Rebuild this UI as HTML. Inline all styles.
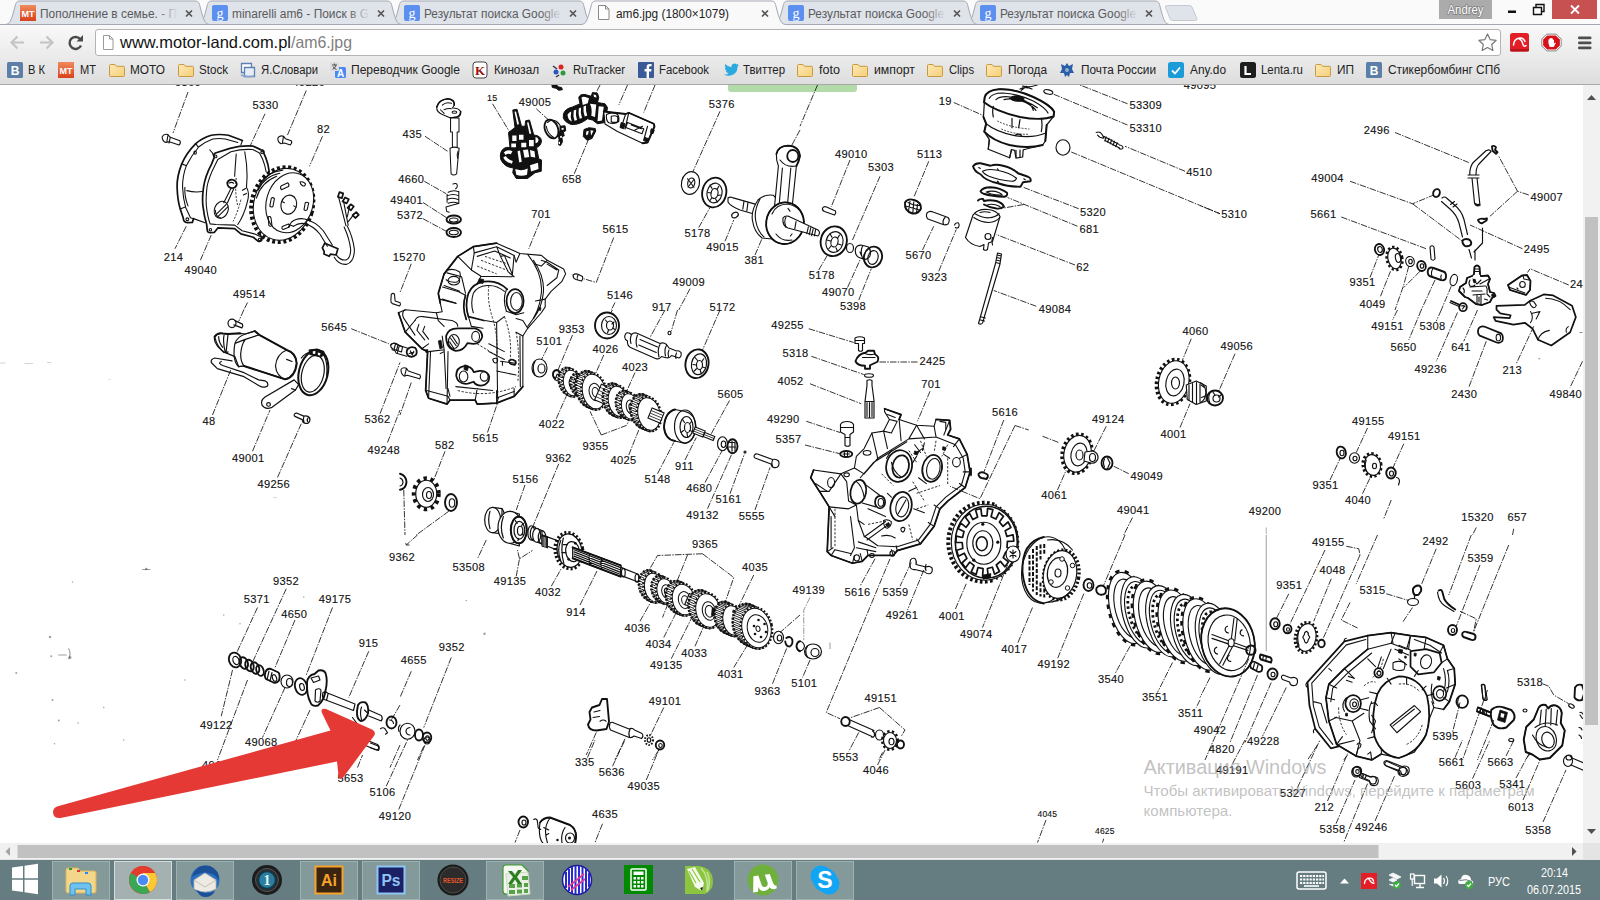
<!DOCTYPE html>
<html lang="ru"><head><meta charset="utf-8"><title>am6.jpg (1800×1079)</title>
<style>
html,body{margin:0;padding:0;background:#fff;overflow:hidden}
svg{display:block}
text{font-family:"Liberation Sans","DejaVu Sans",sans-serif}
.ui{font-size:12px;fill:#222}
.tabt{font-size:12px;fill:#5a5a5a}
.lb{font-size:11.6px;fill:#111;letter-spacing:.45px;stroke:#111;stroke-width:.25px}
.ln{fill:none;stroke:#111;stroke-width:1}
.pt{fill:none;stroke:#111;stroke-width:1.15;stroke-linejoin:round;stroke-linecap:round}
.pw{fill:#fff;stroke:#111;stroke-width:1.15;stroke-linejoin:round;stroke-linecap:round}
.pk{fill:#111;stroke:#111;stroke-width:1;stroke-linejoin:round}
.th{fill:none;stroke:#111;stroke-width:1.8;stroke-linejoin:round;stroke-linecap:round}
.dd{fill:none;stroke:#111;stroke-width:1;stroke-dasharray:2.2 1.6}
.z4 .ln{stroke-width:3.4px;stroke-dasharray:26 5 6 5}
.z4 .sl{fill:none;stroke:#111;stroke-width:3.6px}
.z4 .pt,.z4 .pw{stroke-width:4.6px}
.z4 .pk{stroke-width:3px}
.z4 .th{stroke-width:7.5px}
.z4 .dd{stroke-width:4px;stroke-dasharray:9 6}
.z4 text{font-size:44.5px;letter-spacing:1.4px;stroke-width:.5px;fill:#111;stroke:#111}
.z4 .sm{font-size:36px;letter-spacing:1px}
.z5 .ln{stroke-width:4.4px;stroke-dasharray:33 7 8 7}
.z5 .pt,.z5 .pw{stroke-width:5.6px}
.z5 .pk{stroke-width:4px}
.z5 .th{stroke-width:9px}
.z5 .dd{stroke-width:4.5px;stroke-dasharray:12 8}
.z1 text{font-size:11.1px;letter-spacing:.35px;fill:#111;stroke:#111;stroke-width:.12px}
.z1 .ln{stroke-width:.85px;stroke-dasharray:6.500 1.300 1.500 1.300}
.z1 .sm{font-size:8.500px;letter-spacing:.2px}
.wm{fill:#9a9a9a;fill-opacity:.62}
.z8 .pt,.z8 .pw{stroke-width:9px}
.z8 .th{stroke-width:15px}
.z8 .pk{stroke-width:8px}
.z10 .pt,.z10 .pw{stroke-width:11px}
.z10 .th{stroke-width:18px}
.z10 .pk{stroke-width:8px}
.z6 .pt,.z6 .pw{stroke-width:7px}
.z6 .th{stroke-width:11px}
.z6 .pk{stroke-width:6px}
.z6 .dd{stroke-width:5.500px;stroke-dasharray:14 9}
</style></head><body>
<svg width="1600" height="900" viewBox="0 0 1600 900">
<defs>
<linearGradient id="tbg" x1="0" y1="0" x2="0" y2="1"><stop offset="0" stop-color="#f9f9f9"/><stop offset="0.5" stop-color="#ececec"/><stop offset="1" stop-color="#dddddd"/></linearGradient>
<linearGradient id="fold" x1="0" y1="0" x2="1" y2="1"><stop offset="0" stop-color="#fde9b4"/><stop offset="1" stop-color="#f6cf7a"/></linearGradient>
<linearGradient id="mtg" x1="0" y1="0" x2="0" y2="1"><stop offset="0" stop-color="#f08a5d"/><stop offset="1" stop-color="#d8421d"/></linearGradient>
<linearGradient id="fade" x1="0" y1="0" x2="1" y2="0"><stop offset="0" stop-color="#dfe3ea" stop-opacity="0"/><stop offset="1" stop-color="#dfe3ea"/></linearGradient>
<g id="folder"><path d="M0.5 3.5 q0 -1 1 -1 h4.5 l1.5 1.8 h7 q1 0 1 1 v8.2 q0 1 -1 1 h-13 q-1 0 -1 -1z" fill="url(#fold)" stroke="#c9993f" stroke-width="1"/></g>
<g id="gfav"><rect width="16" height="16" rx="2" fill="#5b8ff0"/><text x="8" y="12.5" text-anchor="middle" font-size="14" fill="#fff" style="font-family:&quot;Liberation Serif&quot;,serif">g</text></g>
<g id="mtfav"><rect width="16" height="16" fill="url(#mtg)"/><text x="8" y="11.5" text-anchor="middle" font-size="9.5" font-weight="bold" fill="#fff" textLength="13" lengthAdjust="spacingAndGlyphs">МТ</text></g>
<g id="tabx"><path d="M-3 -3 L3 3 M3 -3 L-3 3" stroke="#555" stroke-width="1.7" fill="none"/></g>
</defs>
<g id="chrome">
<rect x="0" y="0" width="1600" height="30" fill="#fafafa"/>
<path d="M965 24.5 C970 24.5 971 20 973 14 L975.5 4.5 C976.5 1.5 977.5 1 980 1 L1155 1 C1157.5 1 1158.5 1.5 1159.5 4.5 L1162 14 C1164 20 1165 24.5 1170 24.5" fill="#dfe3ea" stroke="#a4a9b3" stroke-width="1"/>
<use href="#gfav" x="980" y="5"/><text class="tabt" x="1000" y="17.5" textLength="136" lengthAdjust="spacingAndGlyphs">Результат поиска Google</text><rect x="1116" y="4" width="22" height="18" fill="url(#fade)"/><use href="#tabx" x="1149" y="13.5"/>
<path d="M773 24.5 C778 24.5 779 20 781 14 L783.5 4.5 C784.5 1.5 785.5 1 788 1 L963 1 C965.5 1 966.5 1.5 967.5 4.5 L970 14 C972 20 973 24.5 978 24.5" fill="#dfe3ea" stroke="#a4a9b3" stroke-width="1"/>
<use href="#gfav" x="788" y="5"/><text class="tabt" x="808" y="17.5" textLength="136" lengthAdjust="spacingAndGlyphs">Результат поиска Google</text><rect x="924" y="4" width="22" height="18" fill="url(#fade)"/><use href="#tabx" x="957" y="13.5"/>
<path d="M389 24.5 C394 24.5 395 20 397 14 L399.5 4.5 C400.5 1.5 401.5 1 404 1 L579 1 C581.5 1 582.5 1.5 583.5 4.5 L586 14 C588 20 589 24.5 594 24.5" fill="#dfe3ea" stroke="#a4a9b3" stroke-width="1"/>
<use href="#gfav" x="404" y="5"/><text class="tabt" x="424" y="17.5" textLength="136" lengthAdjust="spacingAndGlyphs">Результат поиска Google</text><rect x="540" y="4" width="22" height="18" fill="url(#fade)"/><use href="#tabx" x="573" y="13.5"/>
<path d="M197 24.5 C202 24.5 203 20 205 14 L207.5 4.5 C208.5 1.5 209.5 1 212 1 L387 1 C389.5 1 390.5 1.5 391.5 4.5 L394 14 C396 20 397 24.5 402 24.5" fill="#dfe3ea" stroke="#a4a9b3" stroke-width="1"/>
<use href="#gfav" x="212" y="5"/><text class="tabt" x="232" y="17.5" textLength="137" lengthAdjust="spacingAndGlyphs">minarelli am6 - Поиск в G</text><rect x="348" y="4" width="22" height="18" fill="url(#fade)"/><use href="#tabx" x="381" y="13.5"/>
<path d="M5 24.5 C10 24.5 11 20 13 14 L15.5 4.5 C16.5 1.5 17.5 1 20 1 L195 1 C197.5 1 198.5 1.5 199.5 4.5 L202 14 C204 20 205 24.5 210 24.5" fill="#dfe3ea" stroke="#a4a9b3" stroke-width="1"/>
<use href="#mtfav" x="20" y="5"/><text class="tabt" x="40" y="17.5" textLength="137" lengthAdjust="spacingAndGlyphs">Пополнение в семье. - П</text><rect x="156" y="4" width="22" height="18" fill="url(#fade)"/><use href="#tabx" x="189" y="13.5"/>
<path d="M1167.500 5.500 h22 q2 0 2.800 2 l4.500 11 q0.500 2 -1.500 2 h-22.500 q-2 0 -2.800 -2 l-4.500 -11 q-0.500 -2 2 -2z" fill="#dfe3ea" stroke="#c4c8cf" stroke-width="1"/>
<rect x="0" y="24.5" width="1600" height="60" fill="url(#tbg)"/>
<path d="M0 24.5 H1600" stroke="#a4a9b3" stroke-width="1"/>
<path d="M0 84.5 H1600" stroke="#a8a8a8" stroke-width="1"/>
<path d="M581 24.5 C586 24.5 587 20 589 14 L591.5 4.5 C592.5 1.5 593.5 1 596 1 L771 1 C773.5 1 774.5 1.5 775.5 4.5 L778 14 C780 20 781 24.5 786 24.5 L786 26 L581 26z" fill="#f9f9f9" stroke="none"/>
<path d="M581 24.5 C586 24.5 587 20 589 14 L591.5 4.5 C592.5 1.5 593.5 1 596 1 L771 1 C773.5 1 774.5 1.5 775.5 4.5 L778 14 C780 20 781 24.5 786 24.5" fill="none" stroke="#a4a9b3" stroke-width="1"/>
<path d="M598.5 5.5 h7 l3.5 3.5 v10.5 h-10.5z M605.5 5.5 v3.5 h3.5" fill="#fff" stroke="#8a8a8a" stroke-width="1"/><text class="ui" x="616" y="17.5" textLength="113" lengthAdjust="spacingAndGlyphs">am6.jpg (1800×1079)</text><use href="#tabx" x="765" y="13.5"/>
<rect x="1439" y="0" width="53" height="19" fill="#ababab"/>
<text x="1465.5" y="14" text-anchor="middle" font-size="12.5" fill="#fff" stroke="#7d7d7d" stroke-width="1.6" paint-order="stroke" stroke-linejoin="round" textLength="36" lengthAdjust="spacingAndGlyphs">Andrey</text>
<rect x="1508" y="10.5" width="8" height="2.5" fill="#111"/>
<path d="M1533.5 7.500 h8 v7 h-8z M1536 7 v-2.500 h8 v7 h-2.500" fill="none" stroke="#111" stroke-width="1.4"/>
<rect x="1552" y="0" width="45" height="19" fill="#c75050"/>
<path d="M1571 5.500 l8 8 M1579 5.500 l-8 8" stroke="#fff" stroke-width="1.800"/>
<path d="M24 42.500 H12 M17.500 36.500 L11.500 42.500 L17.500 48.500" fill="none" stroke="#c4c4c4" stroke-width="2.200"/>
<path d="M40 42.500 H52 M46.500 36.500 L52.500 42.500 L46.500 48.500" fill="none" stroke="#c4c4c4" stroke-width="2.200"/>
<path d="M80.500 39.500 A6 6 0 1 0 81 45.500" fill="none" stroke="#4a4a4a" stroke-width="2.400"/><path d="M76.500 41.500 h6.500 v-6.500z" fill="#4a4a4a"/>
<rect x="95.500" y="29.500" width="1405" height="26" rx="2.500" fill="#fff" stroke="#b4b4b4" stroke-width="1"/>
<path d="M103.500 35.500 h6 l3.500 3.500 v10.500 h-9.500z M109.500 35.500 v3.500 h3.500" fill="#fff" stroke="#9a9a9a" stroke-width="1"/>
<text x="120" y="48" font-size="16.500" fill="#111" textLength="171" lengthAdjust="spacingAndGlyphs">www.motor-land.com.pl</text>
<text x="291" y="48" font-size="16.500" fill="#808080" textLength="61" lengthAdjust="spacingAndGlyphs">/am6.jpg</text>
<path d="M1487.500 34 l2.600 5.600 6.100 0.700 -4.500 4.200 1.200 6 -5.400 -3 -5.400 3 1.200 -6 -4.500 -4.200 6.100 -0.700z" fill="#fff" stroke="#777" stroke-width="1.200" stroke-linejoin="round"/>
<rect x="1510" y="33" width="19" height="18.500" rx="2.500" fill="#e41e26"/><rect x="1510" y="49" width="19" height="2.500" rx="1" fill="#b5151b"/>
<path d="M1513.500 45 c.5 -7.500 9 -9.500 11.500 -3.500 M1518.200 38.200 c2.500 1 4.500 4 5 7 q1.200 1.800 2.800 .3" fill="none" stroke="#fff" stroke-width="1.500" stroke-linecap="round"/>
<g transform="translate(1551.500 42.500) scale(.88) translate(-1551.500 -42.500)">
<path d="M1546 33 h11 l5.500 5.500 v8 l-5.500 5.500 h-11 l-5.500 -5.500 v-8z" fill="#fff" stroke="#555" stroke-width="0.800"/>
<path d="M1546.700 34.500 h9.600 l4.700 4.700 v6.600 l-4.700 4.700 h-9.600 l-4.700 -4.700 v-6.600z" fill="#d8101a"/>
<path d="M1548 43 v-4 h1.200 v-1.200 h1.300 v-0.500 h1.300 v0.700 h1.300 v1.500 h1.200 v4.500 l1.200 -1.500 1 0.600 -2.500 4.500 h-4.500z" fill="#fff"/>
</g>
<rect x="1578" y="36.5" width="13.500" height="2.800" rx="1.300" fill="#4e4e4e"/>
<rect x="1578" y="41.5" width="13.500" height="2.800" rx="1.300" fill="#4e4e4e"/>
<rect x="1578" y="46.5" width="13.500" height="2.800" rx="1.300" fill="#4e4e4e"/>
<rect x="7" y="62" width="16" height="16" rx="1.500" fill="#5b7fa6"/><text x="15" y="74.5" text-anchor="middle" font-size="12" font-weight="bold" fill="#fff">В</text>
<text class="ui" x="28" y="74" textLength="17" lengthAdjust="spacingAndGlyphs">В К</text>
<use href="#mtfav" x="58" y="62"/>
<text class="ui" x="80" y="74" textLength="16" lengthAdjust="spacingAndGlyphs">МТ</text>
<use href="#folder" x="109" y="62"/>
<text class="ui" x="130" y="74" textLength="35" lengthAdjust="spacingAndGlyphs">МОТО</text>
<use href="#folder" x="178" y="62"/>
<text class="ui" x="199" y="74" textLength="29" lengthAdjust="spacingAndGlyphs">Stock</text>
<path d="M241.5 63.5 h10 v9 h-10z" fill="#fff" stroke="#5d7fb3" stroke-width="1.300"/><path d="M244.5 67.5 h10 v9 h-10z" fill="#e8eef8" stroke="#5d7fb3" stroke-width="1.300"/><path d="M241 75 q6 3 13 1" fill="none" stroke="#8aa3cc" stroke-width="1.500"/>
<text class="ui" x="261" y="74" textLength="57" lengthAdjust="spacingAndGlyphs">Я.Словари</text>
<rect x="335" y="67" width="11" height="11" rx="1.500" fill="#4a8af4"/><text x="340.5" y="76.5" text-anchor="middle" font-size="10" font-weight="bold" fill="#fff">A</text><rect x="330" y="62" width="9" height="9" rx="1" fill="#dcdcdc"/><path d="M332 65 h5 M334.5 63.5 v1.500 M332.5 69.5 q3 -1.500 3.500 -4.500 M333 66.5 q1 2 3.500 3" stroke="#444" stroke-width=".9" fill="none"/>
<text class="ui" x="351" y="74" textLength="109" lengthAdjust="spacingAndGlyphs">Переводчик Google</text>
<rect x="473" y="62" width="14" height="16" rx="3" fill="#fff" stroke="#444" stroke-width="1"/><text x="480" y="75" text-anchor="middle" font-size="13" font-weight="bold" fill="#a01010" style="font-family:&quot;Liberation Serif&quot;,serif">K</text>
<text class="ui" x="494" y="74" textLength="45" lengthAdjust="spacingAndGlyphs">Кинозал</text>
<circle cx="556" cy="72" r="2.500" fill="#2a55c4"/><circle cx="561" cy="67" r="2.500" fill="#d22"/><circle cx="563" cy="73" r="2.500" fill="#2a9a3a"/><path d="M553 66 l4 3 M559 75 l-3 2" stroke="#334" stroke-width="1.500"/>
<text class="ui" x="573" y="74" textLength="52" lengthAdjust="spacingAndGlyphs">RuTracker</text>
<rect x="638" y="62" width="16" height="16" rx="1" fill="#3b5998"/><path d="M649 78 v-6.500 h2.200 l0.300 -2.500 h-2.500 v-1.500 q0 -1.200 1.200 -1.200 h1.400 v-2.200 h-2 q-3 0 -3 3 v1.900 h-2 v2.500 h2 v6.500z" fill="#fff"/>
<text class="ui" x="659" y="74" textLength="50" lengthAdjust="spacingAndGlyphs">Facebook</text>
<path d="M724 74.5 q3 .5 4.500 -1.200 q-2 -.3 -2.800 -2.200 h1.300 q-2.300 -1 -2.300 -3.300 l1.300 .4 q-2 -2 -.8 -4.200 q2.500 3 6.300 3.300 q-.5 -3.500 2.800 -3.900 q1.500 0 2.500 1 l2 -.8 l-1.300 1.800 l1.700 -.4 l-1.600 1.600 q.2 6 -5.200 8.500 q-4.500 1.800 -8.400 -.6z" fill="#2aa9e0"/>
<text class="ui" x="743" y="74" textLength="42" lengthAdjust="spacingAndGlyphs">Твиттер</text>
<use href="#folder" x="797" y="62"/>
<text class="ui" x="819" y="74" textLength="21" lengthAdjust="spacingAndGlyphs">foto</text>
<use href="#folder" x="852" y="62"/>
<text class="ui" x="874" y="74" textLength="41" lengthAdjust="spacingAndGlyphs">импорт</text>
<use href="#folder" x="927" y="62"/>
<text class="ui" x="949" y="74" textLength="25" lengthAdjust="spacingAndGlyphs">Clips</text>
<use href="#folder" x="986" y="62"/>
<text class="ui" x="1008" y="74" textLength="39" lengthAdjust="spacingAndGlyphs">Погода</text>
<path d="M1067 63 l2 3 4 -2 -1 5 2 4 -4 0 -1 4 -2 -2 -2 2 -1 -4 -4 0 2 -4 -1 -5 4 2z" fill="#2a5fa8"/><circle cx="1067" cy="70" r="2" fill="#fff" opacity=".5"/>
<text class="ui" x="1081" y="74" textLength="75" lengthAdjust="spacingAndGlyphs">Почта России</text>
<rect x="1168" y="62" width="16" height="16" rx="2.500" fill="#1b9bd8"/><path d="M1172 70.5 l3 3 5 -6" fill="none" stroke="#fff" stroke-width="1.800"/>
<text class="ui" x="1190" y="74" textLength="36" lengthAdjust="spacingAndGlyphs">Any.do</text>
<rect x="1240" y="62" width="16" height="16" rx="2.500" fill="#1e1e1e"/><path d="M1245.5 66 v8 h5.500" fill="none" stroke="#fff" stroke-width="2.200"/>
<text class="ui" x="1261" y="74" textLength="42" lengthAdjust="spacingAndGlyphs">Lenta.ru</text>
<use href="#folder" x="1315" y="62"/>
<text class="ui" x="1337" y="74" textLength="17" lengthAdjust="spacingAndGlyphs">ИП</text>
<rect x="1366" y="62" width="16" height="16" rx="1.500" fill="#5b7fa6"/><text x="1374" y="74.5" text-anchor="middle" font-size="12" font-weight="bold" fill="#fff">В</text>
<text class="ui" x="1388" y="74" textLength="112" lengthAdjust="spacingAndGlyphs">Стикербомбинг СПб</text>
</g>
<clipPath id="pagec"><rect x="0" y="85" width="1583" height="758"/></clipPath>
<g id="diagram" clip-path="url(#pagec)">
<g class="z4" transform="translate(0,85) scale(.25)">
<text x="700" y="2">5360</text><text x="1170" y="2">49226</text>
<text x="1010" y="97">5330</text><text x="1268" y="190">82</text>
<text x="655" y="702">214</text><text x="738" y="757">49040</text><text x="932" y="852">49514</text>
<path class="ln" d="M752 28 L692 192 M1225 22 L1150 200 M1060 115 L1000 245 M1290 205 L1238 325 M745 565 L700 655 M845 600 L800 705 M990 870 L975 900"/>
</g>
<g class="z6" transform="translate(160,125) scale(.15552)">
<!-- bolts -->
<path class="pt" d="M14 75 q10 -20 36 -14 l16 18 l62 22 q8 16 -6 28 l-62 -22 l-22 6 q-24 -10 -24 -38z M52 62 l-8 44 M66 80 l-8 36"/>
<path class="pt" d="M758 84 q10 -20 36 -12 l12 16 l38 14 q8 14 -6 26 l-38 -12 l-22 4 q-22 -8 -20 -36z M794 72 l-6 40"/>
<!-- cover 214 -->
<path class="th" d="M530 100 L440 66 Q380 56 330 66 Q270 84 230 120 Q170 180 140 250 Q108 330 110 400 Q112 480 130 540 L150 600 Q150 626 176 628 L208 626 L216 602"/>
<path class="pt" d="M500 112 L420 90 Q380 84 340 90 Q290 108 250 140 Q200 200 170 260 Q144 330 145 400 Q148 470 165 530 L196 596 L290 628 M530 100 L520 128 M216 602 L290 628 M320 160 q20 16 26 44 M172 422 q50 14 100 6 M230 120 l16 22 M140 250 l26 10 M130 540 l32 -12 M160 400 q-4 60 20 120"/>
<ellipse class="pt" cx="226" cy="178" rx="8" ry="10"/><ellipse class="pt" cx="176" cy="606" rx="9" ry="9"/>
<!-- gasket 49040 -->
<path class="th" d="M350 205 Q340 190 356 180 L450 150 Q530 130 600 136 L650 160 Q672 160 668 182 L680 210 Q696 250 702 300 M350 205 L332 250 Q290 330 280 400 Q270 470 276 520 Q284 590 300 640 L304 676 Q304 694 326 692 L350 690 L372 662 L480 666 L520 700 L600 722 L632 748 Q652 752 656 734 L644 704"/>
<path class="pt" d="M372 222 L352 262 Q312 340 302 400 Q294 470 298 520 Q306 590 322 636 L360 640 L480 644 L528 680 L606 700 L640 716 M372 222 L456 172 Q530 152 596 158 L640 180 L660 220 Q676 260 682 300"/>
<ellipse class="pt" cx="358" cy="202" rx="8" ry="9"/><ellipse class="pt" cx="656" cy="176" rx="8" ry="8"/><ellipse class="pt" cx="324" cy="674" rx="8" ry="8"/><ellipse class="pt" cx="640" cy="736" rx="8" ry="8"/>
<!-- inner cover details -->
<path class="pt" d="M545 172 Q560 250 560 330 L556 400 Q580 440 560 500 Q540 580 500 640 M490 186 Q484 260 480 330 M530 420 l20 -12 M536 450 l20 -10"/>
<path class="dd" d="M490 340 Q480 440 500 520 M520 480 Q500 560 470 620"/>
<path class="th" d="M432 372 q10 -24 36 -20 q24 8 26 30 q-8 24 -34 24 q-26 -6 -28 -34z"/><path class="pt" d="M444 374 q14 -10 30 0 M456 408 L410 500 M474 410 L434 500"/>
<ellipse class="pt" cx="394" cy="545" rx="44" ry="56" transform="rotate(22 394 545)"/><path class="pt" d="M366 570 L426 510 M376 586 L436 526 M356 548 q0 40 36 52"/>
<!-- flywheel -->
<ellipse cx="786" cy="512" rx="196" ry="244" transform="rotate(16 786 512)" fill="none" stroke="#111" stroke-width="26" stroke-dasharray="19 17"/>
<ellipse class="pw" cx="790" cy="510" rx="186" ry="234" transform="rotate(16 790 510)"/>
<path class="pt" d="M640 380 q50 -80 150 -90 M630 420 q40 -90 140 -110 M620 470 q30 -100 130 -140"/>
<ellipse class="pw" cx="834" cy="500" rx="150" ry="196" transform="rotate(16 834 500)"/>
<ellipse class="pt" cx="828" cy="512" rx="50" ry="62" transform="rotate(16 828 512)"/>
<path class="pt" d="M778 392 l44 -20 q12 10 4 24 l-44 20 q-12 -8 -4 -24z M900 366 q20 -6 36 12 q-4 18 -16 14 q-18 -8 -20 -26z M716 470 q12 -8 20 4 l-10 50 q-12 8 -20 -4z M934 500 q12 -8 22 2 l-10 44 q-12 8 -20 -2z M696 590 q12 -6 18 8 l6 48 q-10 10 -20 0z M786 652 l40 -16 q12 6 6 20 l-40 16 q-12 -4 -6 -20z M860 520 l14 8 M800 500 l-12 -6"/>
<!-- wires -->
<path class="pt" d="M846 624 Q880 596 930 604 Q1000 620 1050 680 L1108 772 M860 650 Q890 628 930 634 Q990 650 1030 704 L1076 780 M846 624 l-20 30 M830 640 l30 12"/>
<path class="th" d="M1044 790 l16 -30 l84 36 l-12 40 l-36 -6 l-8 14 l-34 -14 l2 -16z"/>
<path class="pt" d="M1120 850 Q1150 900 1200 896 Q1250 880 1250 800 Q1240 720 1204 650 M1136 838 Q1160 872 1196 868 Q1226 856 1226 800 Q1218 730 1184 656 M1196 648 L1150 470 M1210 644 L1180 490 M1204 590 L1220 520 M1212 620 L1250 570"/>
<path class="th" d="M1144 462 l10 -30 l24 8 l-8 30z M1174 492 l16 -26 l24 12 l-14 26z M1206 532 l20 -22 l20 14 l-18 24z M1238 580 l24 -20 l16 18 l-22 20z"/>
</g>
<rect x="728" y="80" width="129" height="12" rx="3" fill="#b2dba9"/>
<g class="z4" transform="translate(400,85) scale(.25)">
<text x="10" y="210">435</text><text x="97" y="390" text-anchor="end">4660</text><text x="92" y="475" text-anchor="end">49401</text><text x="92" y="537" text-anchor="end">5372</text><text x="102" y="703" text-anchor="end">15270</text>
<text class="sm" x="348" y="65">15</text><text x="475" y="82">49005</text><text x="648" y="390">658</text><text x="525" y="533">701</text><text x="810" y="593">5615</text>
<text x="1235" y="90">5376</text><text x="1138" y="607">5178</text><text x="1225" y="663">49015</text><text x="1378" y="715">381</text><text x="1090" y="805">49009</text><text x="828" y="857">5146</text><text x="1008" y="902">917</text><text x="1238" y="902">5172</text>
<path class="ln" d="M100 205 L190 265 M97 385 L185 435 M92 470 L185 530 M92 535 L185 585 M370 75 L440 190 M545 95 L600 145 M755 215 L695 360 M560 545 L515 655 M1280 105 L1170 350 M1195 570 L1240 490 M1300 625 L1335 540 M1420 680 L1450 610 M800 0 L780 40 M910 0 L875 80 M1020 0 L975 110 M1160 815 L1115 900 M860 870 L845 900 M45 715 L0 830 M1600 180 L1565 245 M855 610 L785 790 L735 775"/>
<!-- washers -->
<ellipse class="th" cx="215" cy="538" rx="29" ry="16"/><ellipse class="pt" cx="215" cy="540" rx="17" ry="8"/>
<ellipse class="th" cx="215" cy="590" rx="29" ry="18"/><ellipse class="pt" cx="215" cy="590" rx="18" ry="9"/>
<!-- 5615 dowel -->
<path class="pt" d="M692 760 q10 -8 22 -2 l16 8 q4 10 -4 18 l-22 -6 q-12 -4 -12 -18z M712 760 q-6 10 -2 20"/>
<!-- bearings -->
<ellipse class="pt" cx="1162" cy="392" rx="36" ry="46" transform="rotate(12 1162 392)"/><ellipse class="pt" cx="1165" cy="392" rx="14" ry="20" transform="rotate(12 1165 392)"/><path class="pt" d="M1150 375 l26 34 M1152 408 l24 -30"/>
<ellipse class="th" cx="1257" cy="430" rx="48" ry="60" transform="rotate(12 1257 430)"/><ellipse class="pt" cx="1258" cy="432" rx="30" ry="40" transform="rotate(12 1258 432)"/><ellipse class="pt" cx="1258" cy="434" rx="14" ry="20" transform="rotate(12 1258 434)"/>
<path class="pt" d="M1240 400 l8 14 M1275 405 l-6 12 M1282 440 l-12 2 M1270 468 l-8 -12 M1240 462 l8 -12 M1232 430 l12 2"/>
<ellipse class="pt" cx="1340" cy="520" rx="14" ry="10" transform="rotate(-30 1340 520)"/>
</g>
<g class="z5" transform="translate(380,85) scale(.18328)">
<path class="pw" d="M310 120 Q320 80 370 75 Q410 80 405 110 L395 125 Q430 125 440 145 Q440 170 420 175 L385 180 L350 165 Q305 150 310 120z"/>
<path class="th" d="M310 120 Q320 80 370 75 Q410 80 405 110 M440 145 Q440 170 420 175 L385 180"/>
<ellipse class="pt" cx="406" cy="148" rx="13" ry="6"/><path class="pt" d="M340 110 q20 -20 50 -10 M350 135 q20 -10 40 -6 M330 135 l20 20"/>
<path class="pw" d="M385 180 h46 v76 h-10 v84 h-26 v-84 h-10z"/>
<path class="pw" d="M382 345 Q405 335 432 345 L426 400 L418 485 Q402 498 388 485 L384 400z"/><path class="pt" d="M426 360 q-8 20 -2 40"/>
<!-- spring -->
<path class="pt" d="M398 540 q20 -8 24 8 q0 14 -10 18 M372 585 q30 -16 56 -2 M366 605 q34 -16 64 0 M366 625 q34 -14 64 2 M372 645 q30 -10 54 0 M430 580 v66 M366 596 v44 M428 646 l-36 10 l-32 10 l4 24 l14 4"/>
</g>
<g class="z8" transform="translate(480,85) scale(.125)">
<!-- carb 15 -->
<path class="pk" d="M262 200 L296 194 L332 330 L360 330 L365 286 L396 280 L430 400 Q490 405 492 450 Q484 492 452 500 L470 590 L492 600 L490 690 L440 702 L380 748 L290 748 L262 702 L268 664 Q200 660 168 600 Q150 540 190 508 Q212 494 240 500 L228 380 L280 340z"/>
<path fill="#fff" d="M276 214 l12 -2 l24 100 l-14 6z M376 300 l12 -2 l22 90 l-14 4z M258 404 h34 v44 h-34z M312 398 h36 v40 h-36z M392 440 h38 v50 h-38z M250 468 h38 v30 h-38z M330 462 h40 v36 h-40z M190 540 q30 -30 70 -10 l-14 24 q-24 -10 -40 6z M186 580 q20 40 70 50 l6 -22 q-40 -10 -56 -40z M300 530 l20 -6 l14 90 l-20 6z M344 520 l40 -4 l10 60 l-38 6z M400 520 l36 10 l6 50 l-36 -6z M282 672 q50 20 100 -4 l-6 50 q-44 16 -86 0z M400 642 l64 -20 l4 50 l-60 20z M444 416 q24 4 24 30 q-10 20 -24 20z"/>
<!-- clamp 49005 -->
<ellipse class="th" cx="572" cy="352" rx="52" ry="78" transform="rotate(-22 572 352)"/>
<path class="pt" d="M540 300 q30 -30 70 -10 q30 20 40 60 M530 330 q10 60 60 90"/>
<path class="pk" d="M640 330 l40 -4 l6 40 l-20 10 l8 30 l-20 8 l6 40 l-16 30 l-16 -6 l4 -40 l-6 -50 l14 -20z"/><path fill="#fff" d="M652 344 l16 -2 l2 14 l-16 4z M640 410 l14 -4 l2 14 l-14 4z M628 456 l12 -2 l0 18 l-10 2z"/>
<!-- top small black -->
<path class="pk" d="M575 0 l40 0 l8 14 l30 6 l6 18 l-30 4 l-20 -16 l-30 -6z"/>
<!-- manifold -->
<path class="pk" d="M668 230 Q680 190 740 176 L800 150 L790 100 Q800 70 840 76 L890 90 L900 60 L940 66 L950 100 L940 140 L1000 150 L1020 180 L1000 300 L940 310 L900 280 L860 270 Q800 320 730 316 Q680 300 666 262z"/>
<path fill="#fff" d="M700 238 q10 -20 30 -26 q-10 40 4 80 q-30 -10 -34 -54z M750 204 l20 -8 q-8 40 6 84 l-20 6 q-14 -40 -6 -82z M790 188 l18 -8 q-6 40 8 84 l-18 6 q-14 -40 -8 -82z M828 172 l20 -8 q-4 40 10 80 l-20 8 q-14 -40 -10 -80z M812 100 q10 -10 30 -4 l30 10 l-10 40 l-40 14z M908 76 l20 4 l4 20 l-20 -4z M880 150 l50 6 l-10 100 l-30 -10 q10 -50 -10 -96z M950 170 l40 4 l-14 110 l-36 6z"/>
<path class="pw" d="M990 212 L1165 232 L1190 222 L1390 310 L1396 332 L1340 460 L1300 466 L1100 372 L1000 312z"/>
<path class="th" d="M990 212 L1165 232 L1190 222 L1390 310 L1396 332 L1340 460 L1300 466"/>
<path class="pt" d="M1012 236 q40 -24 84 -4 q20 20 14 60 q-30 24 -80 10 q-24 -20 -18 -66z M1050 250 q30 -10 50 4 q6 20 0 40 q-24 10 -50 0z M1165 232 L1130 340 M1190 222 L1160 352 M1180 300 l130 50 l-14 40 l-130 -50z M1210 320 l80 30 M1240 360 l60 -30 M1340 330 l-30 110"/>
<path class="pk" d="M1130 300 l30 10 l-10 40 l-30 -10z M1320 420 l30 10 l-10 24 l-30 -8z M1370 350 l24 10 l-10 30 l-20 -10z"/>
<!-- 658 -->
<path class="pk" d="M832 356 l40 -14 l50 6 l4 20 l-30 60 l-40 14 l-30 -30z"/><path fill="#fff" d="M850 372 l20 -6 l-6 30 l-16 6z M884 362 l24 4 l-20 40z"/>
</g>
<g class="z5" transform="translate(660,130) scale(.2)">
<path class="pw" d="M340 340 q10 -8 22 -2 L480 372 L470 420 L400 400 Q350 380 340 360z"/>
<path class="pt" d="M420 356 l-6 40 M440 362 l-6 44"/>
<!-- left web -->
<path class="pw" d="M566 326 Q520 320 490 350 Q455 400 462 450 Q470 510 510 540 L560 545 L580 340z"/>
<path class="pt" d="M500 345 Q470 400 478 450 Q486 505 520 535"/>
<!-- conrod -->
<path class="pw" d="M582 120 Q590 80 640 78 Q695 80 700 130 Q694 160 682 180 L662 372 L572 388 L592 180 Q580 150 582 120z"/>
<path class="th" d="M582 120 Q590 80 640 78 Q695 80 700 130 Q694 160 682 180"/>
<ellipse class="th" cx="664" cy="130" rx="28" ry="30"/>
<path class="pt" d="M612 190 L596 372 M654 190 L638 366 M600 150 q30 40 80 30"/>
<!-- right web -->
<ellipse class="pw" cx="625" cy="466" rx="94" ry="104" transform="rotate(8 625 466)"/>
<ellipse class="th" cx="625" cy="466" rx="94" ry="104" transform="rotate(8 625 466)"/>
<path class="pt" d="M560 420 q20 -50 80 -50 q50 10 70 50 M580 520 q30 40 80 30 M640 392 l10 14 M660 520 l-8 10"/>
<path class="pw" d="M615 440 q10 -14 30 -8 L790 500 Q805 512 790 530 L640 490 Q610 480 615 440z"/>
<path class="pt" d="M742 484 l-8 34 M754 488 l-8 36 M766 494 l-8 34 M778 498 l-6 32 M630 436 q-12 20 0 50 M680 458 l-6 36"/>
</g>
<g class="z4" transform="translate(800,85) scale(.25)">
<text x="555" y="78">19</text><text x="1318" y="95">53309</text><text x="1318" y="187">53310</text><text x="140" y="290">49010</text><text x="272" y="343">5303</text><text x="468" y="290">5113</text>
<text x="1120" y="525">5320</text><text x="1118" y="590">681</text><text x="1105" y="742">62</text><text x="422" y="695">5670</text><text x="485" y="783">9323</text><text x="35" y="777">5178</text><text x="88" y="845">49070</text><text x="160" y="900">5398</text><text x="955" y="910">49084</text><text x="1545" y="365">4510</text><text x="1535" y="15">49095</text>
<path class="ln" d="M615 70 L740 125 M1310 75 L1120 0 M1310 160 L1010 35 M1540 345 L1300 245 M1085 268 L1680 515 M1115 495 L890 408 M1110 565 L830 450 M895 478 L815 492 M1100 720 L785 598 M945 885 L775 822 M200 300 L125 487 M320 365 L210 620 M515 305 L455 450 M490 660 L535 565 M555 745 L625 578 M75 740 L110 680 M190 810 L240 700 M235 860 L285 735 M70 0 L0 165"/>
<!-- oring, spring -->
<ellipse class="pt" cx="1052" cy="250" rx="28" ry="31"/>
<path class="pt" d="M1185 190 q14 -6 22 6 l8 14 M1215 205 l60 32 M1220 222 l58 30 M1225 208 l-6 16 M1236 213 l-6 16 M1247 219 l-6 16 M1258 225 l-6 16 M1269 231 l-6 16 M1278 240 q14 2 14 12 q-6 8 -16 2 M1190 200 q10 14 26 12"/>
<!-- gasket 5320 -->
<path class="th" d="M692 325 q10 -14 30 -12 l40 10 q20 -8 50 0 q40 10 60 30 l40 14 q14 6 10 18 l-30 4 l-10 18 q-50 0 -90 -14 q-50 -10 -70 -36 q-24 -10 -30 -32z"/>
<path class="pt" d="M730 345 q20 -12 60 -4 q50 10 76 32 q-4 12 -20 12 q-50 -4 -90 -20 q-22 -10 -26 -20z M715 330 l6 4 M895 375 l6 4 M790 335 l4 6 M790 385 l4 4"/>
<!-- rings -->
<path class="th" d="M722 425 q10 -16 40 -16 q40 2 66 22 q4 12 -10 16 q-50 -2 -84 -12 q-10 -4 -12 -10z M712 462 q8 -8 20 -6 l4 8 q20 -6 50 0 q24 8 30 22 q-10 10 -30 8 q-30 -4 -50 -16"/>
<path class="pt" d="M745 428 q24 -8 50 2 q12 6 14 10 q-20 2 -44 -4z M750 480 q20 -8 50 6"/>
<!-- piston -->
<path class="pw" d="M692 520 q20 -26 60 -22 q36 4 48 28 l-30 100 l-16 6 l-4 26 q-8 6 -16 0 l2 -20 l-16 8 q-40 -6 -58 -36z"/>
<path class="pt" d="M695 530 q30 20 60 20 q30 -2 44 -20 M700 515 q30 18 56 16 q26 -2 40 -16 M720 510 q20 -6 40 0 M770 640 q-4 -20 0 -30"/>
<ellipse class="pt" cx="752" cy="606" rx="12" ry="12"/>
<!-- stud -->
<path class="pt" d="M790 672 l16 4 l-6 40 l-70 236 q-6 8 -16 2 l68 -240z M722 940 l16 4 M725 928 l16 4 M790 680 l14 4 M788 690 l14 4 M786 700 l14 4 M784 710 l14 4"/>
<!-- needle bearing -->
<path class="th" d="M420 470 q10 -18 36 -10 q30 10 28 34 q-10 22 -34 20 q-34 -10 -30 -44z"/>
<path class="pt" d="M440 465 l-6 40 M455 468 l-4 46 M470 478 l-4 36 M425 485 l56 16 M432 470 q20 12 48 12"/>
<!-- pin -->
<path class="pt" d="M508 512 q10 -10 24 -4 l60 22 q10 10 0 26 q-10 6 -20 2 l-60 -22 q-10 -10 -4 -24z M580 530 q-12 12 -6 28"/>
<path class="pt" d="M618 560 q4 -12 16 -8 q6 8 0 18 q-8 4 -12 0"/>
<!-- key -->
<path class="pt" d="M90 492 q6 -8 16 -4 l36 16 q4 8 -4 16 l-40 -14 q-10 -4 -8 -14z"/>
<!-- crank end + bearing 5178 -->
<ellipse class="th" cx="135" cy="625" rx="52" ry="60" transform="rotate(15 135 625)"/>
<ellipse class="pt" cx="138" cy="628" rx="34" ry="42" transform="rotate(15 138 628)"/><ellipse class="pt" cx="138" cy="628" rx="14" ry="20" transform="rotate(15 138 628)"/>
<path class="pt" d="M120 595 l8 14 M158 600 l-8 14 M165 640 l-12 -4 M150 665 l-6 -14 M115 655 l10 -12 M108 620 l14 4"/>
<ellipse class="pt" cx="200" cy="652" rx="14" ry="18"/>
<path class="pt" d="M222 655 q6 -16 26 -14 l24 6 q14 10 8 36 q-8 16 -26 14 l-20 -8 q-16 -10 -12 -34z M250 645 q-10 20 0 48 M240 668 l6 14"/>
<ellipse class="th" cx="292" cy="688" rx="36" ry="42" transform="rotate(15 292 688)"/><ellipse class="pt" cx="292" cy="690" rx="20" ry="28" transform="rotate(15 292 690)"/>
</g>
<g class="z8" transform="translate(940,85) scale(.13333)">
<path class="pw" d="M335 92 Q350 40 440 32 Q560 26 700 90 Q830 150 856 200 L852 236 L800 300 L790 420 L770 450 L640 482 L624 486 L620 540 L570 548 L560 490 L536 484 L522 546 L362 482 L370 410 L332 350 L346 290 L326 240z"/>
<path class="th" d="M335 92 Q350 40 440 32 Q560 26 700 90 Q830 150 856 200 L852 236 Q760 270 600 240 Q420 200 330 130z M332 350 Q400 420 520 450 Q660 480 770 450 M326 240 L346 290 L332 350 M800 300 L790 420"/>
<path class="pt" d="M370 100 Q390 60 470 60 Q580 64 700 120 Q790 170 810 210 M420 110 Q450 80 530 90 Q640 110 730 170 M480 110 Q520 96 590 112 Q680 140 720 190 M520 100 Q580 90 640 120 Q690 150 700 190 M346 290 Q420 350 560 380 Q700 400 794 360 M362 482 L370 410 M522 546 L536 484 M540 250 v70 M600 260 l-10 60 M560 380 q20 -20 50 -4 M570 490 v50 M600 488 v52 M400 160 q-10 40 0 80 M760 250 q10 50 0 100"/>
<path class="pk" d="M540 88 q40 -16 80 4 q20 14 0 26 q-40 10 -80 -6 q-14 -12 0 -24z"/>
<path class="dd" style="stroke-width:6px;stroke-dasharray:14 10" d="M430 270 q100 50 240 60 M460 330 q90 40 200 40"/>
<path class="pt" d="M610 40 l40 -30 M600 30 q40 -20 90 0 M620 8 q50 14 110 -8"/>
<ellipse class="pt" cx="812" cy="52" rx="34" ry="16" transform="rotate(14 812 52)"/>
</g>
<g class="z4" transform="translate(1200,85) scale(.25)">
<text x="85" y="530">5310</text><text x="655" y="195">2496</text><text x="445" y="387">49004</text><text x="1322" y="465">49007</text><text x="442" y="530">5661</text><text x="1295" y="672">2495</text><text x="598" y="805">9351</text><text x="638" y="893">4049</text><text x="1480" y="812">2430</text>
<path class="ln" d="M780 190 L1075 310 M600 385 L850 475 L935 440 M850 475 L1050 625 M1315 440 L1270 425 L1195 285 M1270 425 L1160 525 M565 528 L905 655 M1290 655 L1080 560 M680 770 L715 680 M722 845 L762 745 M835 725 L815 800 L780 900 M880 745 L815 810 M940 780 L885 900 M1005 805 L965 900 M1475 800 L1320 735 L1310 750 M80 515 L0 482"/>
<!-- hose 2496 -->
<path class="pt" d="M1148 262 q10 -6 16 4 l-50 52 q-10 14 -10 40 M1128 262 M1145 262 l-52 48 q-14 16 -14 48 M1072 360 h44 M1072 372 h44 M1088 372 l10 100 q6 16 22 10 M1108 372 l12 110 M1098 472 q10 10 22 4"/>
<path class="th" d="M1168 245 q10 -4 16 4 l-4 10 l10 10 l-6 6 l-14 -12z"/>
<!-- hose 49004 -->
<ellipse class="th" cx="946" cy="432" rx="13" ry="16" transform="rotate(20 946 432)"/>
<path class="pt" d="M968 452 q10 -8 18 0 l30 26 q30 24 40 60 l14 60 M966 466 l34 30 q26 22 36 56 l14 56 M1002 478 l16 -12 M1012 488 l16 -12"/>
<path class="th" d="M1050 622 q10 -10 26 -4 q12 8 8 20 q-10 10 -24 6 q-12 -8 -10 -22z"/>
<path class="th" d="M1112 540 q10 -8 24 -4 l12 -2 l-2 8 l-16 10 q-12 4 -18 -12z"/>
<path class="pt" d="M1130 572 v60 l-34 36 M1076 658 l10 34 M1100 660 v40"/>
<!-- pin 5661 -->
<path class="pt" d="M920 648 q8 -10 16 0 l4 48 q-8 10 -16 0z"/>
<!-- nut gear washers -->
<ellipse class="th" cx="718" cy="658" rx="18" ry="22" transform="rotate(-15 718 658)"/><ellipse class="pt" cx="720" cy="658" rx="9" ry="12" transform="rotate(-15 720 658)"/>
<ellipse cx="778" cy="694" rx="30" ry="46" transform="rotate(-12 778 694)" fill="none" stroke="#111" stroke-width="12" stroke-dasharray="9 9"/>
<ellipse class="pw" cx="778" cy="694" rx="26" ry="42" transform="rotate(-12 778 694)"/>
<ellipse class="pt" cx="792" cy="692" rx="10" ry="18" transform="rotate(-12 792 692)"/>
<ellipse class="pt" cx="840" cy="706" rx="17" ry="20" transform="rotate(-15 840 706)"/><ellipse class="pt" cx="842" cy="706" rx="7" ry="9"/>
<ellipse class="th" cx="886" cy="724" rx="17" ry="20" transform="rotate(-15 886 724)"/><ellipse class="pt" cx="888" cy="724" rx="7" ry="9"/>
<path class="th" d="M912 740 q6 -14 22 -8 l44 16 q10 10 4 28 q-8 8 -18 4 l-46 -16 q-10 -8 -6 -24z"/><path class="pt" d="M932 734 q-10 14 -4 32 M965 760 q-4 10 0 16"/>
<ellipse class="pt" cx="1015" cy="780" rx="14" ry="23" transform="rotate(15 1015 780)"/>
</g>
<g class="z10" transform="translate(1440,250) scale(.1)">
<path class="pw" d="M340 240 L345 170 Q370 140 395 170 L400 240 L410 262 L480 255 L500 290 L480 340 L500 420 L540 430 L555 460 L520 480 L500 520 L420 550 L360 540 L280 480 L250 470 L190 410 L200 370 L260 330 L270 280 L320 260z"/>
<path class="th" d="M340 240 L345 170 Q370 140 395 170 L400 240 M410 262 L480 255 L500 290 L480 340 L500 420 L540 430 L555 460 L520 480 L500 520 L420 550 L360 540 L280 480 L250 470 L190 410 L200 370 L260 330 L270 280 L320 260"/>
<path class="pt" d="M345 190 h50 M345 215 h50 M300 300 q-20 30 0 60 q30 10 50 -10 M330 290 l40 50 l40 -40 M400 340 l90 -50 M300 370 l150 -10 M320 410 l100 0 M330 450 l120 -10 M370 450 v80 M410 450 v90 M390 470 v50 M460 360 q20 30 10 70 M230 380 q20 20 10 50 M470 440 l30 30 M445 490 l30 10"/>
<path class="pk" d="M330 300 l20 -10 l10 30 l-20 10z M520 440 l24 6 l-6 24 l-22 -8z"/>
<!-- triangle plate -->
<path class="pw" d="M680 350 L820 255 L870 250 L905 310 L900 400 L860 450 L700 400z"/>
<path class="th" d="M680 350 L820 255 L870 250 L905 310 L900 400 L860 450 L700 400z"/>
<ellipse class="pt" cx="825" cy="345" rx="28" ry="30"/><path class="pt" d="M690 372 L850 430 M830 260 l10 30 l50 10 M770 380 l10 10"/>
<!-- small bolt -->
<path class="th" d="M110 510 l90 40"/><path class="pt" d="M100 525 l90 40"/>
<ellipse class="th" cx="230" cy="572" rx="38" ry="40"/><path class="pt" d="M215 560 q20 -10 34 6 M225 590 l20 -30"/>
</g>
<g class="z4" transform="translate(0,310) scale(.25)">
<text x="810" y="458">48</text><text x="928" y="608">49001</text><text x="1030" y="712">49256</text><text x="1285" y="82">5645</text><text x="1458" y="452">5362</text><text x="1470" y="575">49248</text>
<path class="ln" d="M850 420 L925 235 M1010 565 L1080 400 M1110 670 L1205 455 M1405 75 L1555 135 M1520 415 L1600 210 M1550 530 L1600 400 M975 0 L955 45"/>
<path class="pt" d="M1562 140 q6 -10 18 -6 l30 14 l-4 20 l-34 -12 q-10 -6 -10 -16z M1582 136 l-6 22 M1592 140 l-6 22"/>
<!-- specks -->
<path class="pt" opacity=".18" d="M0 212 h20 M100 214 h30 M190 210 h14 M436 278 h4 M1095 750 h10"/>
</g>
<g class="z8" transform="translate(200,310) scale(.13333)">
<!-- bolt -->
<ellipse class="pt" cx="240" cy="100" rx="30" ry="32"/><path class="pt" d="M262 80 l56 26 q8 14 -4 28 l-60 -22"/>
<!-- motor -->
<path class="pw" d="M110 200 q20 -30 60 -24 l40 4 L300 175 L340 180 L410 158 L444 186 L650 300 Q720 320 725 400 Q715 500 640 520 L330 420 L290 425 L262 350 L190 320 q-60 -30 -80 -120z"/>
<path class="th" d="M110 200 q20 -30 60 -24 l40 4 L300 175 M410 158 L444 186 L650 300 Q720 320 725 400 Q715 500 640 520 L330 420"/>
<path class="pt" d="M262 250 Q280 200 340 180 L410 158 M340 220 L444 186 M340 220 Q310 260 305 330 Q305 390 330 420 L290 425 Q258 400 255 330 Q255 280 262 250z M650 300 Q575 330 566 420 Q575 500 640 520 M110 200 q-10 30 20 70 l50 50 M140 200 q0 40 30 80 M180 190 q-10 50 10 130 M210 184 l-14 130 M650 370 l40 16 M200 320 l10 -6"/>
<!-- cable -->
<path class="pt" d="M240 382 L110 360 Q76 370 86 396 L130 440 L330 500 L440 566 Q480 590 506 570 Q516 544 490 532 L440 524 L330 470 L170 416 Q130 400 160 386"/>
<!-- clamp -->
<ellipse class="th" cx="850" cy="470" rx="108" ry="172" transform="rotate(14 850 470)"/>
<ellipse class="pt" cx="846" cy="478" rx="82" ry="140" transform="rotate(14 846 478)"/>
<path class="pk" d="M818 300 l60 -8 l50 20 l6 24 l-30 14 l-80 -16z"/><path fill="#fff" d="M846 310 l20 -2 l-2 22 l-18 -2z M884 318 l20 6 l-4 18 l-16 -4z"/>
<path class="pt" d="M760 360 q30 -40 70 -40 M930 340 q30 60 20 160"/>
<path class="pw" d="M706 524 L488 652 Q450 680 466 716 Q490 750 540 730 L716 600 L740 560z"/>
<ellipse class="pt" cx="514" cy="708" rx="14" ry="14"/><path class="pt" d="M716 600 l-30 -10"/>
<!-- bolt 49256 -->
<path class="pt" d="M708 782 q6 -12 20 -8 l50 22 q28 -8 44 12 q8 26 -10 40 q-26 8 -40 -8 l-6 -18 l-54 -24 q-10 -6 -4 -16z M780 796 q-10 24 0 44 M810 810 q-10 12 -2 28"/>
</g>
<g class="z4" transform="translate(400,310) scale(.25)">
<text x="635" y="90">9353</text><text x="545" y="140">5101</text><text x="770" y="172">4026</text><text x="888" y="243">4023</text><text x="555" y="472">4022</text><text x="290" y="527">5615</text><text x="140" y="557">582</text><text x="582" y="607">9362</text><text x="450" y="693">5156</text><text x="730" y="560">9355</text><text x="842" y="617">4025</text><text x="1270" y="353">5605</text><text x="1100" y="640">911</text><text x="978" y="690">5148</text><text x="1145" y="727">4680</text><text x="1262" y="772">5161</text><text x="1145" y="835">49132</text><text x="1355" y="838">5555</text>
<text x="1485" y="75">49255</text><text x="1530" y="187">5318</text><text x="1510" y="300">4052</text><text x="1468" y="450">49290</text><text x="1502" y="533">5357</text>
<path class="ln" d="M690 100 L630 245 M590 150 L565 200 M815 180 L780 260 M940 250 L900 340 M625 435 L665 345 M350 490 L440 225 M180 565 L135 680 M635 615 L530 870 M500 700 L465 800 M805 500 L760 405 M805 500 L905 462 L915 445 M915 580 L955 480 M1318 362 L1245 495 M1140 600 L1185 510 M1030 655 L1095 530 M1220 690 L1290 560 M1230 795 L1330 570 M1320 735 L1378 575 M1420 800 L1480 630 M45 290 L0 420 M15 720 L20 900 M195 805 L65 900 M850 0 L840 15 M1060 0 L1000 110 M1110 0 L1085 85 M1280 0 L1210 160"/>
<!-- bearing 5101, clip -->
<ellipse class="pt" cx="558" cy="232" rx="30" ry="36"/><ellipse class="pt" cx="566" cy="234" rx="14" ry="18"/><path class="pt" d="M540 205 q-14 26 0 56"/>
<path class="th" d="M612 262 q-2 -18 14 -22 q14 2 12 18 M612 262 q4 16 18 14"/>
<!-- upper bearing -->
<ellipse class="th" cx="828" cy="62" rx="48" ry="52"/><ellipse class="pt" cx="836" cy="62" rx="30" ry="36"/><ellipse class="pt" cx="840" cy="62" rx="14" ry="18"/><path class="pt" d="M822 40 l8 10 M856 48 l-8 8 M860 78 l-10 -6 M830 92 l4 -12"/>
<!-- shaft 917 -->
<path class="pw" d="M900 100 q4 -12 16 -8 l10 6 q10 -10 24 -4 l90 40 q14 -6 26 4 l10 14 l30 12 q10 -4 18 6 q4 16 -8 22 l-30 -10 q-10 14 -26 8 l-14 -4 q-10 14 -24 8 l-100 -44 q-14 -8 -12 -26 l-8 -6 q-6 -8 -2 -18z"/>
<path class="pt" d="M926 98 q-8 20 -2 36 M950 100 q-10 24 -2 48 M1040 138 q-12 20 -4 50 M1066 142 q-10 16 -4 42 M1076 160 q-6 10 -2 26 M960 118 l70 30 M955 140 l70 30 M1106 172 q-6 10 -2 22"/>
<ellipse class="pt" cx="1078" cy="92" rx="6" ry="7"/>
<!-- bearing 5172 -->
<ellipse class="th" cx="1188" cy="215" rx="46" ry="58" transform="rotate(10 1188 215)"/><ellipse class="pt" cx="1196" cy="217" rx="30" ry="42" transform="rotate(10 1196 217)"/><ellipse class="pt" cx="1198" cy="220" rx="12" ry="18"/>
<path class="pt" d="M1180 190 l10 12 M1215 195 l-8 12 M1222 232 l-12 -4 M1205 255 l-4 -14 M1176 245 l10 -10 M1172 218 l12 2"/>
<!-- bearing 5148 -->
<path class="pw" d="M1100 398 q-40 10 -44 70 q4 50 44 56 l40 10 q40 -10 44 -66 q-4 -54 -44 -62z"/>
<path class="th" d="M1100 398 q-40 10 -44 70 q4 50 44 56"/>
<ellipse class="pt" cx="1140" cy="466" rx="42" ry="66"/><ellipse class="pt" cx="1146" cy="468" rx="26" ry="42"/><ellipse class="pt" cx="1150" cy="470" rx="12" ry="20"/>
<path class="pt" d="M1130 438 l8 12 M1166 446 l-8 10 M1170 486 l-12 -4 M1150 506 l-2 -14 M1124 490 l10 -8"/>
<!-- washers / nut / bolt -->
<ellipse class="pt" cx="1290" cy="535" rx="20" ry="28"/><ellipse class="pt" cx="1294" cy="537" rx="9" ry="13"/>
<ellipse class="th" cx="1330" cy="545" rx="20" ry="28"/><path class="pt" d="M1318 530 h22 M1316 548 h26 M1328 525 v40 M1340 528 v36"/>
<ellipse class="pt" cx="1380" cy="568" rx="4" ry="4"/>
<path class="pt" d="M1418 580 q4 -6 12 -4 l60 22 q14 -4 24 6 q6 14 -4 24 q-12 6 -22 -2 l-4 -10 l-64 -24 q-6 -4 -2 -12z M1492 598 q-8 12 -2 26"/>
<!-- sprocket 582 -->
<ellipse cx="105" cy="735" rx="48" ry="60" fill="none" stroke="#111" stroke-width="20" stroke-dasharray="13 14"/>
<ellipse class="pw" cx="105" cy="735" rx="42" ry="54"/><ellipse class="pt" cx="112" cy="738" rx="22" ry="28"/><ellipse class="pt" cx="116" cy="740" rx="10" ry="14"/>
<ellipse class="th" cx="204" cy="770" rx="24" ry="34"/><ellipse class="pt" cx="208" cy="772" rx="11" ry="17"/>
<path class="th" d="M0 655 q24 6 26 34 q-4 28 -26 30"/><path class="pt" d="M0 672 q12 4 12 18 q-2 12 -12 14"/>
</g>
<g class="z5" transform="translate(380,235) scale(.19436)">
<path class="pw" d="M600 42 L720 95 L830 105 L860 130 L945 175 L955 200 L935 240 L880 290 L850 330 L850 370 L830 400 L760 480 L735 520 L735 780 L690 830 L600 865 L500 870 L490 850 L360 850 L345 870 L250 840 L235 800 L245 600 L215 585 L130 500 L95 400 L130 385 L290 400 L320 395 L310 350 L300 300 L330 200 L400 110 L480 60z"/>
<path class="th" d="M600 42 L480 60 L400 110 L330 200 L300 300 L310 350 M95 400 L130 500 L215 585 L245 600 L235 800 L250 840 L345 870 L360 850 L490 850 L500 870 L600 865 L690 830 L735 780"/>
<path class="pt" d="M485 92 L600 60 L690 105 L680 215 L520 212 L470 180z M500 110 L590 82 L670 118 M520 212 L500 250 M600 60 L620 110 L660 190 L690 215 M620 110 L640 105 L680 200"/>
<path class="dd" d="M520 130 L650 180 M540 110 L660 150 M500 160 L600 200"/>
<path class="th" d="M455 300 q20 -50 80 -60 q70 -10 120 40 M455 300 q-20 60 0 120 l80 20 M440 310 q-20 60 4 124"/>
<path class="pt" d="M480 300 q20 -36 70 -40 q50 -4 90 30 M650 282 q-20 50 0 110 M480 300 q-16 50 0 100"/>
<ellipse class="th" cx="695" cy="340" rx="44" ry="62"/><ellipse class="pt" cx="702" cy="342" rx="30" ry="46"/>
<path class="pt" d="M760 100 q80 100 70 200 q-10 100 -70 170 M790 130 q60 90 50 170 q-6 70 -50 130 M830 130 l30 10 l60 40 l-10 40 l-50 40 M860 150 l50 30 M350 180 q30 -10 60 10 q10 30 -10 50 q-30 10 -60 -10 M330 260 l80 30 M320 330 l70 20"/>
<ellipse class="pt" cx="380" cy="235" rx="30" ry="22"/>
<path class="dd" d="M560 260 q-10 80 20 170 q30 100 20 200 M640 420 q40 100 30 220 M500 560 l100 60 M700 500 q20 100 10 250 M400 800 q150 40 300 -20"/>
<path class="pt" d="M130 385 q-20 10 -10 40 l60 90 M180 440 q10 -24 40 -20 l150 20 q30 10 30 30 M200 460 l-10 30 l40 50 M230 470 l-10 26 l30 40 M250 600 l80 -10 l10 200 M320 520 l10 70 M330 600 l-20 10"/>
<path class="th" d="M340 520 q10 -40 60 -40 l90 0 q36 10 36 44 q-10 36 -46 36 l-30 -4 q-20 40 -60 40 q-50 -10 -50 -76z"/>
<ellipse class="pt" cx="380" cy="548" rx="28" ry="36"/><ellipse class="pt" cx="492" cy="522" rx="20" ry="26"/>
<path class="pt" d="M362 530 l30 40 M372 520 l26 40 M358 550 l20 30"/>
<path class="th" d="M392 725 q0 -44 40 -50 q40 0 50 30 l30 -6 q40 -4 50 30 q0 40 -40 46 q-30 0 -40 -20 l-30 10 q-50 6 -60 -40z"/>
<ellipse class="pt" cx="430" cy="728" rx="22" ry="28"/><ellipse class="pt" cx="536" cy="728" rx="20" ry="24"/>
<path class="pk" d="M436 668 l20 6 l-6 24 l-18 -6z"/>
<path class="th" d="M664 648 q8 -10 20 -6 l14 8 q4 10 -4 18 l-18 -4 q-12 -4 -12 -16z"/>
<path class="pt" d="M580 640 q10 -10 24 -2 q4 12 -6 20 q-14 2 -18 -18z M630 650 v20 M240 800 l110 30 l10 20 M350 790 l10 40 M600 865 l10 -30 l80 -30"/>
<!-- bolts left -->
<path class="pt" d="M58 565 q10 -14 28 -6 l14 10 l50 16 M62 590 l14 4 l8 14 l54 16 M100 568 l-10 36"/>
<path class="th" d="M140 590 q14 -20 40 -10 q14 14 6 36 q-18 18 -40 6 q-14 -14 -6 -32z"/><path class="pt" d="M156 596 l10 22 l8 -20 M150 610 l24 -6"/>
<path class="pt" d="M108 692 q10 -14 28 -6 l10 14 l60 20 q6 10 -2 20 l-64 -18 l-16 4 q-16 -10 -16 -34z M136 688 l-8 32"/>
<!-- 15270 bracket -->
<path class="pt" d="M58 305 q8 -8 16 -2 l4 36 l26 10 q4 10 -4 16 l-36 -12 q-8 -4 -8 -14z"/>
<path class="pt" d="M345 195 L420 215 M322 268 L405 292 M306 330 L392 352 M400 110 L470 180 M480 60 L485 92 M330 200 L350 180 M420 215 L440 300 M405 292 L440 310 M600 450 L605 840 M720 520 L722 780 M540 440 L600 450 L640 420 M455 420 L470 470 L530 480 M650 392 L700 410 L740 400 M735 520 L700 500 M250 840 L260 600 M345 870 L350 600 M490 850 L500 790 M600 865 L600 800 M690 830 L690 790 M130 500 L180 440 M215 585 L250 560 M290 400 L300 440 L330 470 M560 560 L640 600 M560 600 L640 640 M620 650 L700 660 M600 700 L700 720 M390 780 L580 800 M760 480 L735 440 L700 430 M850 330 L800 340 M860 130 L830 160 L800 150 M720 95 L700 140 L690 105"/>
<path class="pk" d="M510 225 l24 4 l-4 20 l-22 -4z M300 545 l14 -4 l8 40 l-14 4z M236 590 l10 0 l0 14 l-10 0z M818 372 l10 2 l-2 14 l-10 -2z"/>
</g>
<g class="z5" transform="translate(800,400) scale(.19436)">
<path class="pw" d="M435 45 L520 75 L510 100 L600 130 L690 135 L700 100 L770 105 L775 150 L760 180 L820 200 L860 280 L875 370 L850 450 L760 520 L720 560 L690 650 L620 740 L500 775 L480 800 L350 800 L320 830 L270 840 L160 800 L140 780 L150 550 L100 470 L55 400 L70 360 L210 380 L280 350 L290 290 L330 250 L370 170 L430 160 L460 100 L435 60z"/>
<path class="th" d="M435 45 L520 75 L510 100 M700 100 L770 105 L775 150 L760 180 L820 200 L860 280 L875 370 L850 450 L760 520 L720 560 L690 650 L620 740 L500 775 L480 800 L350 800 L320 830 L270 840 L160 800 L140 780 L150 550 L100 470 L55 400 L70 360"/>
<path class="pt" d="M330 380 L400 300 L560 200 L700 190 L800 230 L840 300 L850 370 L830 440 L750 500 L700 550 L670 640 L610 720 L500 755 L400 750 L330 700 L300 620 L290 540 M310 400 L380 320 L550 215 M460 100 L500 110 L470 170 L430 160 M450 75 L490 90 M720 110 L750 115 L750 150 M600 130 L560 200 M690 135 L700 190 M280 350 L330 380 M210 380 L240 420 L250 520 L290 540 M150 550 L250 560 L290 540 M160 600 v160 M260 600 l20 160 l-20 40 M290 760 l100 20 M300 730 l90 30 M80 430 l60 40"/>
<ellipse class="th" cx="510" cy="340" rx="66" ry="82" transform="rotate(12 510 340)"/><ellipse class="th" cx="518" cy="342" rx="42" ry="58" transform="rotate(12 518 342)"/><path class="pt" d="M470 320 q10 50 50 76"/>
<ellipse class="th" cx="680" cy="352" rx="50" ry="70" transform="rotate(12 680 352)"/><ellipse class="pt" cx="686" cy="354" rx="34" ry="54" transform="rotate(12 686 354)"/>
<ellipse class="th" cx="520" cy="548" rx="54" ry="76" transform="rotate(12 520 548)"/><ellipse class="pt" cx="526" cy="550" rx="32" ry="52" transform="rotate(12 526 550)"/><path class="pt" d="M505 585 l40 -70"/>
<ellipse class="th" cx="300" cy="472" rx="40" ry="62" transform="rotate(10 300 472)"/>
<path class="pt" d="M330 430 l80 60 M320 530 l70 20 M290 420 q30 20 40 80"/>
<ellipse class="th" cx="412" cy="525" rx="26" ry="32"/><ellipse class="pt" cx="416" cy="527" rx="14" ry="20"/>
<ellipse class="pt" cx="160" cy="425" rx="18" ry="26"/><ellipse class="pt" cx="805" cy="320" rx="20" ry="24"/>
<ellipse class="pt" cx="345" cy="272" rx="20" ry="12"/>
<path class="dd" d="M560 260 l40 60 M620 210 l30 80 M700 210 l-10 60 M760 230 l-30 60 M580 420 l60 100 M600 480 l120 -40 M560 640 l20 80 M760 300 v140 M420 380 l60 60 M350 640 l100 -20 M600 560 l60 -20 M180 560 v200"/>
<path class="pt" d="M330 705 l110 -80 M345 720 l110 -80 M430 620 q20 -10 40 6 q0 24 -20 34 q-20 0 -20 -40z M420 700 q40 -10 70 10 M590 230 l30 40 M640 220 l-10 40 M520 660 q10 -10 20 0 q0 16 -10 20 q-14 -4 -10 -20z M880 360 v30"/>
<ellipse class="pt" cx="292" cy="812" rx="14" ry="16"/><ellipse class="pt" cx="475" cy="790" rx="12" ry="14"/><ellipse class="pt" cx="370" cy="800" rx="12" ry="10"/>
<ellipse class="pt" cx="240" cy="385" rx="14" ry="10"/>
<path class="pt" d="M370 170 L400 300 M430 160 L450 250 M510 100 L520 210 M600 130 L640 200 M770 105 L740 180 M820 200 L790 240 M860 280 L820 300 M875 370 L840 370 M850 450 L820 430 M720 560 L690 540 M690 650 L660 630 M620 740 L600 715 M500 775 L495 750 M150 550 L180 600 M100 470 L150 470 L210 380 M140 780 L170 760 M160 800 L180 770 L260 790 M270 840 L280 800 M320 830 L310 790 M350 800 L345 770 M480 800 L470 770 M445 300 L470 260 M575 330 L600 290 M610 400 L650 430 M450 480 L470 500 M585 560 L640 580 M740 280 L770 300 M600 270 L630 250 M560 470 L600 450 M350 560 L440 600 M300 620 L330 640"/>
<path class="pk" d="M590 262 l20 6 l-6 16 l-18 -6z M735 240 l16 4 l-4 16 l-14 -4z M440 640 l16 -10 l8 14 l-14 10z M874 350 l8 0 l0 36 l-8 0z"/>
</g>
<g class="z4" transform="translate(800,310) scale(.25)">
<text x="478" y="218">2425</text><text x="485" y="310">701</text><text x="768" y="423">5616</text><text x="1168" y="452">49124</text><text x="965" y="755">4061</text><text x="1322" y="680">49049</text><text x="1268" y="815">49041</text><text x="1530" y="100">4060</text><text x="1442" y="513">4001</text>
<path class="ln" d="M470 208 L315 208 M520 325 L470 445 M815 440 L735 650 M1225 465 L1175 565 M1030 720 L1065 640 M1315 655 L1255 625 M1330 830 L1295 900 M1565 115 L1530 200 M1520 470 L1560 375 M35 75 L215 130 M45 185 L255 258 M40 295 L245 375 M25 445 L160 490 M20 540 L160 575 M860 462 L720 755 L600 705 M860 462 L915 480 M970 505 L1035 530"/>
<!-- bolt 49255 -->
<path class="pt" d="M220 112 q20 -10 38 0 v22 h-8 v28 q-8 6 -16 0 v-28 h-14z M222 122 h34"/>
<!-- 2425 -->
<path class="th" d="M222 205 q10 -30 40 -34 l10 -8 h24 l4 14 q20 10 10 30 l-30 14 v14 h-20 v-12 q-30 0 -38 -18z"/>
<path class="pt" d="M255 172 q20 10 44 4 M250 190 h50"/>
<ellipse class="pt" cx="276" cy="262" rx="18" ry="7"/>
<path class="pt" d="M268 282 q10 -6 20 0 v20 l8 60 v70 h-36 v-66 l8 -64z M262 366 h34 M268 370 v56 M278 370 v60 M288 370 v56"/>
<!-- bolt 49290 -->
<path class="pt" d="M162 458 q6 -12 26 -12 q20 0 26 12 v30 l-14 10 v44 q-10 6 -20 0 v-44 l-18 -10z M162 470 h52 M180 510 h20"/>
<ellipse class="th" cx="185" cy="576" rx="24" ry="12"/><path class="pt" d="M172 576 h26 M178 570 v12 M190 570 v12"/>
<!-- stud end -->

<!-- dowel 5616 -->
<path class="th" d="M714 656 q8 -10 20 -6 l16 8 q4 10 -4 18 l-20 -4 q-12 -4 -12 -16z"/>
<!-- gear 4061 -->
<ellipse cx="1108" cy="575" rx="58" ry="78" transform="rotate(12 1108 575)" fill="none" stroke="#111" stroke-width="16" stroke-dasharray="10 10"/>
<ellipse class="pw" cx="1110" cy="575" rx="54" ry="74" transform="rotate(12 1110 575)"/>
<ellipse class="pt" cx="1116" cy="578" rx="32" ry="46" transform="rotate(12 1116 578)"/><ellipse class="pt" cx="1118" cy="580" rx="14" ry="20"/>
<path class="pw" d="M1140 568 l30 -4 q24 6 22 30 q-8 22 -28 18 l-28 -8z"/><ellipse class="pt" cx="1170" cy="590" rx="12" ry="16"/>
<ellipse class="th" cx="1228" cy="612" rx="22" ry="26"/><path class="pt" d="M1218 596 q-8 16 0 32 M1230 592 l10 20 l-10 22"/>
<!-- gear 4060 -->
<ellipse cx="1492" cy="288" rx="64" ry="90" transform="rotate(12 1492 288)" fill="none" stroke="#111" stroke-width="16" stroke-dasharray="10 10"/>
<ellipse class="pw" cx="1495" cy="288" rx="60" ry="86" transform="rotate(12 1495 288)"/>
<ellipse class="pt" cx="1500" cy="290" rx="36" ry="54" transform="rotate(12 1500 290)"/><ellipse class="pt" cx="1502" cy="292" rx="16" ry="24"/>
<path class="pw" d="M1545 300 l40 -16 l40 20 v60 l-40 14 l-36 -20z"/><path class="pt" d="M1556 300 v60 M1570 294 v76 M1586 290 v84 M1600 296 v70"/>
<!-- primary gear top (drawn in next tile too) -->
</g>
<g class="z4" transform="translate(1200,310) scale(.25)">
<text x="82" y="160">49056</text><text x="685" y="78">49151</text><text x="878" y="80">5308</text><text x="762" y="165">5650</text><text x="1005" y="165">641</text><text x="858" y="252">49236</text><text x="1210" y="255">213</text><text x="1005" y="352">2430</text><text x="1398" y="350">49840</text><text x="608" y="460">49155</text><text x="752" y="520">49151</text><text x="450" y="715">9351</text><text x="580" y="775">4040</text><text x="195" y="820">49200</text><text x="1045" y="845">15320</text><text x="1230" y="845">657</text>
<path class="ln" d="M140 175 L75 325 M790 0 L770 40 M885 0 L835 120 M965 0 L945 45 M1030 10 L945 205 M1110 0 L1055 125 M1145 125 L1075 310 M1335 65 L1265 215 M1530 205 L1480 310 M670 472 L625 570 M815 535 L770 635 M520 680 L560 595 M650 735 L680 672 M765 760 L735 835 M1105 870 L1090 900 M1255 875 L1250 900"/>
<path class="ln" opacity=".4" d="M265 870 L265 900"/>
<!-- pinion nut -->
<path class="pt" d="M0 290 q20 6 24 40 q-4 36 -24 40 M4 300 l14 10 M6 350 l14 -6"/>
<ellipse class="th" cx="60" cy="352" rx="32" ry="30"/><ellipse class="pt" cx="66" cy="354" rx="14" ry="14"/><path class="pt" d="M40 330 q-10 20 0 44 M50 326 l10 14 M84 340 l-10 8"/>
<!-- small gear group -->
<ellipse class="th" cx="565" cy="570" rx="18" ry="24" transform="rotate(-15 565 570)"/><ellipse class="pt" cx="568" cy="572" rx="8" ry="11"/>
<ellipse class="pt" cx="618" cy="592" rx="20" ry="21"/><ellipse class="pt" cx="620" cy="594" rx="8" ry="9"/>
<ellipse cx="688" cy="620" rx="36" ry="46" transform="rotate(-10 688 620)" fill="none" stroke="#111" stroke-width="12" stroke-dasharray="9 9"/>
<ellipse class="pw" cx="690" cy="620" rx="32" ry="42" transform="rotate(-10 690 620)"/><ellipse class="pt" cx="698" cy="624" rx="8" ry="11"/><path class="pt" d="M665 600 q-8 20 0 44"/>
<ellipse class="th" cx="764" cy="652" rx="19" ry="22"/><ellipse class="pt" cx="766" cy="654" rx="8" ry="10"/>
<path class="pt" d="M786 670 q12 2 12 16 l-4 14"/>
<path class="pt" opacity=".5" d="M1520 90 h8 M1355 195 h4"/>
</g>
<g class="z5" transform="translate(1300,200) scale(.18893)">
<path class="th" d="M1040 560 L1190 555 L1215 535 L1290 500 L1340 505 L1440 560 L1460 620 L1430 700 L1330 770 L1260 740 L1230 680 L1190 650 L1130 660 L1035 640 L1025 620 L1110 625 L1115 610 L1060 600 L1040 580z"/>
<path class="pt" d="M1215 540 q10 -10 22 -2 l14 20 q-4 12 -16 12 q-16 -8 -20 -30z M1220 590 q20 30 0 60 M1230 600 l40 -10 l-20 40 M1300 520 q70 0 130 60 M1420 670 q-16 10 -10 30 M1260 740 q10 -40 60 -50"/>
<path class="th" d="M945 680 q10 -16 30 -10 l90 36 q14 14 6 40 q-12 14 -30 8 l-90 -36 q-14 -14 -6 -38z"/><ellipse class="pt" cx="1050" cy="728" rx="12" ry="18"/>
</g>
<g class="z4" transform="translate(0,535) scale(.25)">
<text x="1092" y="200">9352</text><text x="975" y="270">5371</text><text x="1275" y="272">49175</text><text x="1125" y="330">4650</text><text x="1435" y="447">915</text><text x="800" y="777">49122</text><text x="980" y="843">49068</text><text x="1556" y="102">9362</text>
<path class="ln" d="M1030 290 L945 475 M930 540 L885 725 M1145 215 L1005 520 M990 580 L870 900 M1180 340 L1100 530 M1140 610 L1050 810 M1330 290 L1225 560 M1475 465 L1395 650 M1240 700 L1180 830 M1600 680 L1565 740 M1440 790 L1390 900 M1600 840 L1560 930"/>
<!-- shaft assembly -->
<ellipse class="th" cx="940" cy="500" rx="24" ry="30" transform="rotate(-20 940 500)"/><ellipse class="pt" cx="944" cy="502" rx="12" ry="17" transform="rotate(-20 944 502)"/>
<ellipse class="th" cx="975" cy="512" rx="16" ry="24" transform="rotate(-20 975 512)"/><ellipse class="th" cx="998" cy="522" rx="16" ry="24" transform="rotate(-20 998 522)"/><ellipse class="th" cx="1020" cy="532" rx="16" ry="24" transform="rotate(-20 1020 532)"/><ellipse class="th" cx="1040" cy="542" rx="14" ry="22" transform="rotate(-20 1040 542)"/>
<path class="th" d="M1062 548 q6 -16 22 -12 l30 14 q8 12 2 32 q-8 12 -22 8 l-30 -14 q-8 -10 -2 -28z"/><ellipse class="pt" cx="1098" cy="572" rx="8" ry="14" transform="rotate(-20 1098 572)"/><path class="pt" d="M1076 545 l-8 34 M1088 550 l-8 34"/>
<ellipse class="pt" cx="1148" cy="586" rx="24" ry="26"/><ellipse class="pt" cx="1158" cy="590" rx="12" ry="16"/>
<ellipse class="th" cx="1204" cy="606" rx="24" ry="34" transform="rotate(-15 1204 606)"/><ellipse class="pt" cx="1208" cy="608" rx="9" ry="14" transform="rotate(-15 1208 608)"/>
<path class="th" d="M1228 590 q4 -30 30 -34 l16 -14 q20 -4 28 10 q10 30 0 70 q-6 40 -30 60 q-24 6 -30 -12 q-16 -30 -14 -80z"/>
<path class="pt" d="M1244 572 l30 -8 l6 16 l-26 10z M1262 620 q14 -10 22 0 l-4 44 q-10 10 -20 0z"/>
<path class="pt" d="M1292 630 q10 -6 18 2 l110 44 l-6 26 l-116 -44 q-12 -8 -6 -28z M1300 632 l-6 26 M1312 636 l-6 26 M1475 700 l50 22 q8 10 0 22 l-50 -20"/>
<path class="th" d="M1432 680 q10 -16 30 -10 q14 12 10 44 q-10 30 -30 30 q-16 -10 -14 -40z"/><path class="pt" d="M1446 688 q-8 24 0 50 M1458 700 l10 10 M1410 730 l30 40"/>
<ellipse class="th" cx="1566" cy="750" rx="20" ry="24"/><path class="pt" d="M1558 740 q14 0 16 14 M1522 775 q10 -8 18 0 l10 16 l-8 6 M1600 760 q-10 10 -4 26"/>
<path class="pt" d="M1470 822 l40 16 q10 8 4 18 q-6 6 -14 2 l-38 -16"/>
<!-- specks -->
<g fill="#555" opacity=".55"><circle cx="585" cy="136" r="5"/><circle cx="200" cy="408" r="5"/><circle cx="205" cy="485" r="4"/><circle cx="280" cy="490" r="6"/><circle cx="65" cy="552" r="4"/><circle cx="210" cy="660" r="4"/><circle cx="235" cy="742" r="4"/><circle cx="312" cy="752" r="3"/><circle cx="895" cy="320" r="3"/><circle cx="960" cy="355" r="3"/><circle cx="1215" cy="248" r="3"/><circle cx="290" cy="188" r="3"/><circle cx="740" cy="580" r="3"/><circle cx="495" cy="820" r="3"/><circle cx="218" cy="835" r="3"/><circle cx="415" cy="690" r="3"/></g>
<path class="pt" opacity=".4" d="M570 138 h30 M235 480 h30 M275 455 q10 20 0 40"/>
</g>
<g class="z4" transform="translate(400,535) scale(.25)">
<text x="210" y="145">53508</text><text x="375" y="198">49135</text><text x="540" y="245">4032</text><text x="665" y="322">914</text><text x="1168" y="50">9365</text><text x="1368" y="145">4035</text><text x="898" y="387">4036</text><text x="982" y="452">4034</text><text x="1000" y="535">49135</text><text x="1125" y="487">4033</text><text x="1270" y="570">4031</text><text x="1418" y="640">9363</text><text x="155" y="465">9352</text><text x="107" y="517" text-anchor="end">4655</text><text x="995" y="680">49101</text><text x="1570" y="235">49139</text><text x="1565" y="608">5101</text><text x="700" y="925">335</text>
<path class="ln" d="M345 20 L310 95 M465 165 L478 95 L530 62 M478 95 L470 60 M605 205 L645 135 M720 280 L790 140 M1210 75 L1030 82 L965 195 M1150 80 L1050 330 M1210 75 L1335 170 L1290 300 M1415 160 L1355 285 M960 345 L1005 265 M1055 410 L1105 310 M1085 495 L1175 315 M1180 445 L1215 365 M1335 530 L1390 440 M1490 595 L1550 445 M1600 320 L1520 390 M205 490 L95 770 M45 545 L0 650 M1055 690 L1000 805 M785 790 L745 880 M900 815 L860 900 M1035 860 L1010 900 M95 845 L70 900 M70 0 L25 40 L22 28 M25 40 L38 40"/>
<ellipse class="pt" cx="1514" cy="410" rx="20" ry="25"/><ellipse class="pt" cx="1518" cy="412" rx="9" ry="12"/>
<path class="th" d="M1545 412 q16 -10 24 6 q4 20 -10 28 q-16 0 -18 -20"/><path class="th" d="M1600 425 q-14 4 -14 22 q4 16 14 18"/>
<!-- shift shaft 335 -->
<path class="th" d="M768 690 l30 -10 l10 -24 l20 0 l8 90 l-10 30 l-40 6 q-30 0 -34 -24 l10 -20 l-4 -30z"/>
<path class="pt" d="M776 708 l24 -6 M772 730 l26 -4 M800 745 q14 -10 24 0"/>
<path class="pt" d="M840 752 q8 -6 16 0 l60 24 q14 -6 22 4 l30 14 q8 10 -2 20 l-30 -10 q-10 10 -24 4 l-70 -28 q-8 -12 -2 -28z M920 778 q-8 14 -2 30"/>
<ellipse cx="996" cy="820" rx="16" ry="20" fill="none" stroke="#111" stroke-width="8" stroke-dasharray="6 6"/><ellipse class="pt" cx="996" cy="820" rx="7" ry="9"/>
<ellipse class="th" cx="1040" cy="840" rx="17" ry="18"/><ellipse class="pt" cx="1042" cy="842" rx="7" ry="8"/>
<!-- 9352 rings left -->
<ellipse class="pt" cx="30" cy="785" rx="30" ry="32"/><path class="pt" d="M40 770 q-16 2 -16 16 q2 14 16 14"/>
<ellipse class="th" cx="76" cy="800" rx="16" ry="22"/><ellipse class="th" cx="108" cy="810" rx="17" ry="20"/><ellipse class="pt" cx="110" cy="812" rx="7" ry="9"/>
<g fill="#555" opacity=".55"><circle cx="338" cy="395" r="5"/><circle cx="265" cy="262" r="3"/></g>
</g>
<g class="z8" transform="translate(470,490) scale(.13333)">
<!-- cup 53508 -->
<path class="pw" d="M170 130 l70 10 v190 l-70 -10z"/>
<ellipse class="pw" cx="170" cy="225" rx="60" ry="95"/><path class="pt" d="M150 160 q-20 60 0 130 M240 140 q40 50 0 190"/>
<!-- bearing 5156 -->
<path class="pw" d="M300 160 l70 20 v240 l-70 -20z"/>
<ellipse class="pw" cx="300" cy="280" rx="90" ry="120"/>
<ellipse class="pw" cx="366" cy="300" rx="60" ry="100"/><ellipse class="th" cx="366" cy="300" rx="60" ry="100"/>
<ellipse class="pt" cx="370" cy="302" rx="40" ry="66"/><ellipse class="pt" cx="376" cy="306" rx="20" ry="34"/>
<path class="pt" d="M340 230 l14 20 M400 250 l-12 16 M404 340 l-16 -8 M360 380 l4 -18 M250 200 q-30 80 0 160"/>
<!-- washers -->
<ellipse class="pw" cx="460" cy="322" rx="26" ry="54"/><ellipse class="pt" cx="478" cy="328" rx="26" ry="54"/>
<path class="pw" d="M500 290 l40 14 v100 l-40 -14z"/><ellipse class="pw" cx="500" cy="340" rx="30" ry="52"/><ellipse class="pt" cx="540" cy="354" rx="28" ry="50"/>
<path class="pk" d="M540 336 l40 14 v84 l-40 -14z"/><path d="M548 350 v70 M558 352 v74 M568 356 v74" stroke="#fff" stroke-width="4" fill="none"/>
<path class="pw" d="M580 352 l110 40 v70 l-110 -40z"/>
<!-- gear 4032 -->
<ellipse cx="742" cy="455" rx="100" ry="134" transform="rotate(-10 742 455)" fill="none" stroke="#111" stroke-width="30" stroke-dasharray="15 15"/>
<ellipse class="pw" cx="746" cy="455" rx="92" ry="126" transform="rotate(-10 746 455)"/>
<path class="pt" d="M680 380 q-30 70 0 150 M700 360 q-24 90 4 190"/>
<ellipse class="pt" cx="770" cy="462" rx="52" ry="76" transform="rotate(-10 770 462)"/>
<circle cx="790" cy="400" r="10" fill="#111"/><circle cx="740" cy="520" r="10" fill="#111"/><path class="pt" d="M700 410 h30 M690 470 h30"/>
<!-- splined shaft -->
<path class="pw" d="M770 430 L1130 565 Q1150 600 1130 650 L770 512z"/>
<path class="pt" d="M780 448 L1130 582 M780 464 L1130 600 M780 480 L1130 618 M780 496 L1130 634 M900 480 q-16 40 0 84 M990 514 q-16 40 0 84"/>
<path class="th" d="M770 430 L1130 565 M770 512 L1130 650"/>
<path class="pw" d="M1130 580 L1262 632 Q1282 660 1262 690 L1130 640z"/><ellipse class="pt" cx="1150" cy="620" rx="14" ry="32"/><ellipse class="pt" cx="1252" cy="662" rx="14" ry="30"/>
</g>
<g id="gears1">
<path d="M554.9 379.8 L564.9 383.8 L567.1 378.2 L557.1 374.2z" fill="#fff" stroke="#111" stroke-width="1.1"/>
<path d="M556.0 377.0 L566.0 381.0" fill="none" stroke="#111" stroke-width=".8"/>
<ellipse cx="568.3" cy="381.4" rx="9.3" ry="13.8" transform="rotate(-12 568.3 381.4)" fill="#fff" stroke="#111" stroke-width="2.6" stroke-dasharray="1.800 1.800"/>
<path d="M574.6 394.1 L578.2 395.7 M573.0 395.1 L576.7 396.7 M571.4 395.7 L575.0 397.3 M569.6 395.9 L573.3 397.4 M567.8 395.6 L571.5 397.1 M566.0 394.9 L569.7 396.4 M564.3 393.7 L568.0 395.3 M562.7 392.2 L566.4 393.8 M561.3 390.4 L565.0 392.0 M560.1 388.3 L563.8 389.9 M559.1 386.0 L562.8 387.5 M558.4 383.5 L562.1 385.1 M558.1 381.0 L561.7 382.6 M558.0 378.5 L561.7 380.1 M558.2 376.1 L561.9 377.7 M558.8 373.9 L562.5 375.4 M559.6 371.8 L563.3 373.4 M560.8 370.1 L564.4 371.7 M562.1 368.7 L565.8 370.3 M563.6 367.7 L567.3 369.3 M565.3 367.2 L569.0 368.7 M567.0 367.0 L570.7 368.6 M568.8 367.3 L572.5 368.9" fill="none" stroke="#111" stroke-width="0.90"/>
<ellipse cx="572.0" cy="383.0" rx="9.3" ry="13.8" transform="rotate(-12 572.0 383.0)" fill="#fff" stroke="#111" stroke-width="2.6" stroke-dasharray="1.800 1.800"/>
<ellipse cx="572.0" cy="383.0" rx="8.5" ry="13.0" transform="rotate(-12 572.0 383.0)" fill="#fff" stroke="#111" stroke-width="1.00"/>
<ellipse cx="573.0" cy="383.5" rx="3.8" ry="5.9" transform="rotate(-12 573.0 383.5)" fill="none" stroke="#111" stroke-width="1.00"/>
<ellipse cx="573.5" cy="383.8" rx="1.7" ry="2.6" transform="rotate(-12 573.5 383.8)" fill="none" stroke="#111" stroke-width="1.00"/>
<ellipse cx="577.8" cy="384.4" rx="7.3" ry="10.8" transform="rotate(-12 577.8 384.4)" fill="#fff" stroke="#111" stroke-width="2.6" stroke-dasharray="1.800 1.800"/>
<path d="M581.9 395.1 L585.6 396.7 M580.2 395.8 L583.9 397.3 M578.4 395.9 L582.1 397.4 M576.6 395.4 L580.2 397.0 M574.8 394.4 L578.4 395.9 M573.1 392.8 L576.8 394.4 M571.7 390.9 L575.4 392.4 M570.6 388.6 L574.3 390.2 M569.9 386.1 L573.6 387.7 M569.6 383.6 L573.2 385.1 M569.6 381.0 L573.3 382.6 M570.1 378.7 L573.8 380.2 M571.0 376.6 L574.7 378.2 M572.2 374.9 L575.9 376.5 M573.7 373.8 L577.4 375.3 M575.4 373.1 L579.1 374.7 M577.2 373.0 L580.9 374.6" fill="none" stroke="#111" stroke-width="0.90"/>
<ellipse cx="581.5" cy="386.0" rx="7.3" ry="10.8" transform="rotate(-12 581.5 386.0)" fill="#fff" stroke="#111" stroke-width="2.6" stroke-dasharray="1.800 1.800"/>
<ellipse cx="581.5" cy="386.0" rx="6.5" ry="10.0" transform="rotate(-12 581.5 386.0)" fill="#fff" stroke="#111" stroke-width="1.00"/>
<ellipse cx="588.5" cy="389.2" rx="12.3" ry="18.3" transform="rotate(-12 588.5 389.2)" fill="#fff" stroke="#111" stroke-width="2.6" stroke-dasharray="1.800 1.800"/>
<path d="M595.6 406.5 L601.2 408.8 M594.1 407.3 L599.6 409.7 M592.5 407.8 L598.0 410.2 M590.7 408.0 L596.3 410.4 M589.0 407.9 L594.5 410.3 M587.2 407.5 L592.8 409.8 M585.5 406.7 L591.0 409.0 M583.8 405.6 L589.3 408.0 M582.2 404.3 L587.7 406.6 M580.7 402.7 L586.3 405.0 M579.4 400.9 L584.9 403.2 M578.2 398.8 L583.7 401.2 M577.1 396.6 L582.7 399.0 M576.3 394.3 L581.8 396.6 M575.7 391.9 L581.2 394.2 M575.3 389.4 L580.8 391.8 M575.1 387.0 L580.6 389.3 M575.1 384.5 L580.6 386.9 M575.4 382.2 L580.9 384.5 M575.9 379.9 L581.4 382.3 M576.6 377.9 L582.1 380.2 M577.5 376.0 L583.0 378.3 M578.6 374.3 L584.2 376.7 M579.9 372.9 L585.4 375.3 M581.3 371.8 L586.8 374.2 M582.9 371.0 L588.4 373.3 M584.5 370.5 L590.0 372.8 M586.2 370.3 L591.7 372.6 M588.0 370.4 L593.5 372.7" fill="none" stroke="#111" stroke-width="0.90"/>
<ellipse cx="594.0" cy="391.5" rx="12.3" ry="18.3" transform="rotate(-12 594.0 391.5)" fill="#fff" stroke="#111" stroke-width="2.6" stroke-dasharray="1.800 1.800"/>
<ellipse cx="594.0" cy="391.5" rx="11.5" ry="17.5" transform="rotate(-12 594.0 391.5)" fill="#fff" stroke="#111" stroke-width="1.00"/>
<ellipse cx="595.0" cy="392.0" rx="5.8" ry="8.8" transform="rotate(-12 595.0 392.0)" fill="none" stroke="#111" stroke-width="1.00"/>
<ellipse cx="595.5" cy="392.3" rx="3.2" ry="4.9" transform="rotate(-12 595.5 392.3)" fill="none" stroke="#111" stroke-width="1.00"/>
<path d="M594.6 399.8 L610.6 406.8 L617.4 391.2 L601.4 384.2z" fill="#fff" stroke="#111" stroke-width="1.1"/>
<path d="M600.0 387.3 L616.0 394.3 M598.7 390.4 L614.7 397.4 M597.3 393.6 L613.3 400.6 M596.0 396.7 L612.0 403.7" fill="none" stroke="#111" stroke-width=".8"/>
<ellipse cx="613.9" cy="399.6" rx="10.8" ry="16.3" transform="rotate(-12 613.9 399.6)" fill="#fff" stroke="#111" stroke-width="2.6" stroke-dasharray="1.800 1.800"/>
<path d="M620.5 414.9 L625.1 416.9 M619.0 415.8 L623.6 417.7 M617.5 416.3 L622.1 418.2 M615.8 416.4 L620.4 418.4 M614.1 416.3 L618.7 418.2 M612.4 415.8 L617.0 417.7 M610.8 414.9 L615.4 416.9 M609.2 413.8 L613.8 415.7 M607.7 412.3 L612.3 414.3 M606.3 410.6 L610.9 412.6 M605.1 408.7 L609.7 410.6 M604.0 406.6 L608.6 408.5 M603.2 404.3 L607.8 406.3 M602.6 402.0 L607.2 403.9 M602.2 399.6 L606.8 401.5 M602.0 397.2 L606.6 399.1 M602.1 394.8 L606.7 396.7 M602.4 392.5 L607.0 394.5 M603.0 390.4 L607.6 392.4 M603.8 388.5 L608.4 390.4 M604.8 386.8 L609.4 388.7 M606.0 385.3 L610.6 387.3 M607.3 384.2 L611.9 386.1 M608.8 383.3 L613.4 385.3 M610.3 382.8 L614.9 384.8 M612.0 382.7 L616.6 384.6 M613.7 382.8 L618.3 384.8" fill="none" stroke="#111" stroke-width="0.90"/>
<ellipse cx="618.5" cy="401.5" rx="10.8" ry="16.3" transform="rotate(-12 618.5 401.5)" fill="#fff" stroke="#111" stroke-width="2.6" stroke-dasharray="1.800 1.800"/>
<ellipse cx="618.5" cy="401.5" rx="10.0" ry="15.5" transform="rotate(-12 618.5 401.5)" fill="#fff" stroke="#111" stroke-width="1.00"/>
<ellipse cx="625.4" cy="404.6" rx="9.3" ry="13.8" transform="rotate(-12 625.4 404.6)" fill="#fff" stroke="#111" stroke-width="2.6" stroke-dasharray="1.800 1.800"/>
<path d="M631.6 417.3 L636.2 419.2 M630.1 418.2 L634.7 420.2 M628.4 418.8 L633.0 420.8 M626.7 419.0 L631.3 420.9 M624.9 418.7 L629.5 420.6 M623.1 418.0 L627.7 419.9 M621.4 416.8 L626.0 418.8 M619.8 415.3 L624.4 417.3 M618.4 413.5 L623.0 415.5 M617.2 411.4 L621.8 413.4 M616.2 409.1 L620.8 411.0 M615.5 406.6 L620.1 408.6 M615.1 404.1 L619.7 406.1 M615.1 401.6 L619.7 403.6 M615.3 399.2 L619.9 401.2 M615.9 397.0 L620.5 398.9 M616.7 395.0 L621.3 396.9 M617.8 393.2 L622.4 395.2 M619.2 391.8 L623.8 393.8 M620.7 390.9 L625.3 392.8 M622.4 390.3 L627.0 392.2 M624.1 390.1 L628.7 392.1 M625.9 390.4 L630.5 392.4" fill="none" stroke="#111" stroke-width="0.90"/>
<ellipse cx="630.0" cy="406.5" rx="9.3" ry="13.8" transform="rotate(-12 630.0 406.5)" fill="#fff" stroke="#111" stroke-width="2.6" stroke-dasharray="1.800 1.800"/>
<ellipse cx="630.0" cy="406.5" rx="8.5" ry="13.0" transform="rotate(-12 630.0 406.5)" fill="#fff" stroke="#111" stroke-width="1.00"/>
<ellipse cx="631.0" cy="407.0" rx="4.7" ry="7.2" transform="rotate(-12 631.0 407.0)" fill="none" stroke="#111" stroke-width="1.00"/>
<ellipse cx="631.5" cy="407.3" rx="2.5" ry="3.9" transform="rotate(-12 631.5 407.3)" fill="none" stroke="#111" stroke-width="1.00"/>
<ellipse cx="642.6" cy="411.3" rx="11.8" ry="17.3" transform="rotate(-12 642.6 411.3)" fill="#fff" stroke="#111" stroke-width="2.6" stroke-dasharray="1.800 1.800"/>
<path d="M649.4 427.7 L655.8 430.4 M647.9 428.5 L654.3 431.2 M646.3 429.0 L652.8 431.7 M644.7 429.2 L651.1 431.9 M643.0 429.0 L649.4 431.8 M641.3 428.6 L647.8 431.4 M639.7 427.9 L646.1 430.6 M638.0 426.9 L644.5 429.6 M636.5 425.6 L642.9 428.4 M635.1 424.1 L641.5 426.9 M633.8 422.4 L640.2 425.1 M632.6 420.5 L639.1 423.2 M631.6 418.4 L638.1 421.1 M630.8 416.2 L637.3 418.9 M630.2 413.9 L636.7 416.6 M629.8 411.6 L636.3 414.3 M629.7 409.2 L636.1 411.9 M629.7 406.9 L636.2 409.6 M630.0 404.7 L636.4 407.4 M630.5 402.6 L636.9 405.3 M631.2 400.6 L637.6 403.3 M632.1 398.8 L638.5 401.5 M633.1 397.2 L639.6 400.0 M634.4 395.9 L640.8 398.6 M635.7 394.8 L642.2 397.6 M637.2 394.1 L643.7 396.8 M638.8 393.6 L645.2 396.3 M640.4 393.4 L646.9 396.1 M642.1 393.5 L648.6 396.2" fill="none" stroke="#111" stroke-width="0.90"/>
<ellipse cx="649.0" cy="414.0" rx="11.8" ry="17.3" transform="rotate(-12 649.0 414.0)" fill="#fff" stroke="#111" stroke-width="2.6" stroke-dasharray="1.800 1.800"/>
<ellipse cx="649.0" cy="414.0" rx="11.0" ry="16.5" transform="rotate(-12 649.0 414.0)" fill="#fff" stroke="#111" stroke-width="1.00"/>
<path d="M647.9 418.1 L659.9 423.1 L664.1 412.9 L652.1 407.9z" fill="#fff" stroke="#111" stroke-width="1.1"/>
<path d="M651.1 410.5 L663.1 415.5 M650.0 413.0 L662.0 418.0 M648.9 415.5 L660.9 420.5" fill="none" stroke="#111" stroke-width=".8"/>
</g>
<g id="shaftend"><path d="M692.8 433.0 L702.8 437.0 L705.2 431.0 L695.2 427.0z" fill="#fff" stroke="#111" stroke-width="1.1"/>
<path d="M694.4 429.0 L704.4 433.0 M693.6 431.0 L703.6 435.0" fill="none" stroke="#111" stroke-width=".8"/><path d="M703.2 436.5 L713.2 440.5 L714.8 436.5 L704.8 432.5z" fill="#fff" stroke="#111" stroke-width="1.1"/>
<path d="M704.0 434.5 L714.0 438.5" fill="none" stroke="#111" stroke-width=".8"/></g>
<g id="gears2">
<ellipse cx="649.9" cy="585.5" rx="10.8" ry="15.3" transform="rotate(-12 649.9 585.5)" fill="#fff" stroke="#111" stroke-width="2.6" stroke-dasharray="1.800 1.800"/>
<path d="M656.6 599.8 L661.2 601.7 M655.0 600.7 L659.6 602.7 M653.2 601.3 L657.8 603.2 M651.4 601.5 L656.0 603.4 M649.6 601.3 L654.2 603.2 M647.7 600.7 L652.3 602.6 M645.9 599.7 L650.5 601.7 M644.2 598.4 L648.8 600.3 M642.7 596.8 L647.3 598.7 M641.3 594.8 L645.9 596.8 M640.1 592.7 L644.7 594.7 M639.2 590.4 L643.8 592.3 M638.6 588.0 L643.2 589.9 M638.2 585.5 L642.8 587.4 M638.1 583.0 L642.7 584.9 M638.3 580.5 L642.9 582.5 M638.8 578.2 L643.4 580.2 M639.5 576.1 L644.1 578.1 M640.5 574.2 L645.1 576.2 M641.8 572.6 L646.4 574.6 M643.2 571.3 L647.8 573.3 M644.8 570.4 L649.4 572.3 M646.6 569.8 L651.2 571.8 M648.4 569.6 L653.0 571.6 M650.2 569.8 L654.8 571.8" fill="none" stroke="#111" stroke-width="0.90"/>
<ellipse cx="654.5" cy="587.5" rx="10.8" ry="15.3" transform="rotate(-12 654.5 587.5)" fill="#fff" stroke="#111" stroke-width="2.6" stroke-dasharray="1.800 1.800"/>
<ellipse cx="654.5" cy="587.5" rx="10.0" ry="14.5" transform="rotate(-12 654.5 587.5)" fill="#fff" stroke="#111" stroke-width="1.00"/>
<ellipse cx="660.9" cy="589.0" rx="9.3" ry="13.3" transform="rotate(-12 660.9 589.0)" fill="#fff" stroke="#111" stroke-width="2.6" stroke-dasharray="1.800 1.800"/>
<path d="M667.0 601.3 L671.6 603.2 M665.5 602.3 L670.1 604.2 M663.8 602.8 L668.4 604.8 M662.1 603.0 L666.7 604.9 M660.3 602.7 L664.9 604.7 M658.5 602.0 L663.1 604.0 M656.8 601.0 L661.4 602.9 M655.2 599.5 L659.8 601.5 M653.8 597.8 L658.4 599.7 M652.6 595.7 L657.2 597.7 M651.7 593.5 L656.3 595.5 M651.0 591.1 L655.6 593.1 M650.7 588.7 L655.3 590.7 M650.6 586.3 L655.2 588.3 M650.9 584.0 L655.5 585.9 M651.4 581.8 L656.0 583.7 M652.3 579.8 L656.9 581.8 M653.4 578.2 L658.0 580.1 M654.8 576.8 L659.4 578.8 M656.3 575.8 L660.9 577.8 M658.0 575.3 L662.6 577.2 M659.7 575.1 L664.3 577.1 M661.5 575.4 L666.1 577.3" fill="none" stroke="#111" stroke-width="0.90"/>
<ellipse cx="665.5" cy="591.0" rx="9.3" ry="13.3" transform="rotate(-12 665.5 591.0)" fill="#fff" stroke="#111" stroke-width="2.6" stroke-dasharray="1.800 1.800"/>
<ellipse cx="665.5" cy="591.0" rx="8.5" ry="12.5" transform="rotate(-12 665.5 591.0)" fill="#fff" stroke="#111" stroke-width="1.00"/>
<ellipse cx="666.5" cy="591.5" rx="4.7" ry="6.9" transform="rotate(-12 666.5 591.5)" fill="none" stroke="#111" stroke-width="1.00"/>
<ellipse cx="667.0" cy="591.8" rx="2.5" ry="3.8" transform="rotate(-12 667.0 591.8)" fill="none" stroke="#111" stroke-width="1.00"/>
<path d="M665.5 595.5 L675.5 600.0 L680.5 589.0 L670.5 584.5z" fill="#fff" stroke="#111" stroke-width="1.1"/>
<path d="M669.2 587.3 L679.2 591.8 M668.0 590.0 L678.0 594.5 M666.8 592.7 L676.8 597.2" fill="none" stroke="#111" stroke-width=".8"/>
<ellipse cx="678.0" cy="597.2" rx="11.8" ry="16.3" transform="rotate(-12 678.0 597.2)" fill="#fff" stroke="#111" stroke-width="2.6" stroke-dasharray="1.800 1.800"/>
<path d="M684.9 612.5 L690.4 614.8 M683.3 613.3 L688.8 615.7 M681.5 613.9 L687.1 616.2 M679.7 614.1 L685.3 616.4 M677.9 613.9 L683.4 616.3 M676.1 613.5 L681.6 615.8 M674.3 612.6 L679.8 615.0 M672.6 611.5 L678.1 613.9 M671.0 610.1 L676.5 612.4 M669.5 608.4 L675.1 610.7 M668.2 606.5 L673.8 608.8 M667.2 604.4 L672.7 606.7 M666.3 602.1 L671.8 604.5 M665.7 599.8 L671.2 602.1 M665.3 597.4 L670.8 599.7 M665.2 595.0 L670.7 597.3 M665.3 592.6 L670.8 594.9 M665.7 590.3 L671.2 592.7 M666.3 588.2 L671.9 590.5 M667.2 586.2 L672.7 588.6 M668.3 584.5 L673.8 586.8 M669.6 583.0 L675.1 585.4 M671.1 581.8 L676.6 584.2 M672.7 581.0 L678.2 583.3 M674.4 580.4 L679.9 582.8 M676.2 580.2 L681.7 582.6 M678.0 580.4 L683.6 582.7" fill="none" stroke="#111" stroke-width="0.90"/>
<ellipse cx="683.5" cy="599.5" rx="11.8" ry="16.3" transform="rotate(-12 683.5 599.5)" fill="#fff" stroke="#111" stroke-width="2.6" stroke-dasharray="1.800 1.800"/>
<ellipse cx="683.5" cy="599.5" rx="11.0" ry="15.5" transform="rotate(-12 683.5 599.5)" fill="#fff" stroke="#111" stroke-width="1.00"/>
<ellipse cx="684.5" cy="600.0" rx="6.1" ry="8.5" transform="rotate(-12 684.5 600.0)" fill="none" stroke="#111" stroke-width="1.00"/>
<ellipse cx="685.0" cy="600.3" rx="3.3" ry="4.6" transform="rotate(-12 685.0 600.3)" fill="none" stroke="#111" stroke-width="1.00"/>
<path d="M684.7 604.5 L697.7 610.0 L702.3 599.0 L689.3 593.5z" fill="#fff" stroke="#111" stroke-width="1.1"/>
<path d="M688.2 596.2 L701.2 601.7 M687.0 599.0 L700.0 604.5 M685.8 601.8 L698.8 607.3" fill="none" stroke="#111" stroke-width=".8"/>
<ellipse cx="701.6" cy="607.8" rx="12.8" ry="17.8" transform="rotate(-12 701.6 607.8)" fill="#fff" stroke="#111" stroke-width="2.6" stroke-dasharray="1.800 1.800"/>
<path d="M708.7 624.6 L715.2 627.3 M707.1 625.4 L713.6 628.2 M705.4 626.0 L711.9 628.7 M703.7 626.2 L710.1 628.9 M701.9 626.1 L708.3 628.8 M700.0 625.7 L706.5 628.4 M698.3 624.9 L704.7 627.7 M696.5 623.9 L703.0 626.7 M694.9 622.6 L701.3 625.4 M693.4 621.1 L699.8 623.8 M692.0 619.3 L698.4 622.0 M690.7 617.3 L697.2 620.1 M689.7 615.2 L696.2 617.9 M688.9 612.9 L695.3 615.7 M688.3 610.6 L694.7 613.3 M687.9 608.2 L694.3 610.9 M687.7 605.8 L694.1 608.5 M687.8 603.4 L694.2 606.1 M688.1 601.1 L694.5 603.9 M688.7 598.9 L695.1 601.7 M689.4 596.9 L695.9 599.6 M690.4 595.1 L696.8 597.8 M691.6 593.4 L698.0 596.2 M692.9 592.0 L699.3 594.8 M694.4 590.9 L700.8 593.7 M696.0 590.1 L702.4 592.8 M697.7 589.6 L704.1 592.3 M699.5 589.4 L705.9 592.1 M701.3 589.5 L707.7 592.2" fill="none" stroke="#111" stroke-width="0.90"/>
<ellipse cx="708.0" cy="610.5" rx="12.8" ry="17.8" transform="rotate(-12 708.0 610.5)" fill="#fff" stroke="#111" stroke-width="2.6" stroke-dasharray="1.800 1.800"/>
<ellipse cx="708.0" cy="610.5" rx="12.0" ry="17.0" transform="rotate(-12 708.0 610.5)" fill="#fff" stroke="#111" stroke-width="1.00"/>
<ellipse cx="709.0" cy="611.0" rx="6.6" ry="9.4" transform="rotate(-12 709.0 611.0)" fill="none" stroke="#111" stroke-width="1.00"/>
<ellipse cx="709.5" cy="611.3" rx="4.2" ry="5.9" transform="rotate(-12 709.5 611.3)" fill="none" stroke="#111" stroke-width="1.00"/>
<path d="M712 607 l8 3 l-1 8 l-8 -2.500z" fill="#111"/>
<ellipse cx="725.6" cy="617.4" rx="10.8" ry="15.8" transform="rotate(-12 725.6 617.4)" fill="#fff" stroke="#111" stroke-width="2.6" stroke-dasharray="1.800 1.800"/>
<path d="M731.9 632.4 L739.3 635.6 M730.5 633.2 L737.9 636.3 M729.1 633.6 L736.5 636.7 M727.6 633.8 L734.9 636.9 M726.0 633.7 L733.4 636.8 M724.5 633.3 L731.8 636.4 M723.0 632.6 L730.3 635.8 M721.5 631.7 L728.8 634.9 M720.1 630.6 L727.4 633.7 M718.7 629.2 L726.1 632.3 M717.5 627.6 L724.9 630.7 M716.5 625.8 L723.8 628.9 M715.6 623.9 L722.9 627.0 M714.8 621.9 L722.2 625.0 M714.3 619.8 L721.7 622.9 M713.9 617.7 L721.3 620.8 M713.8 615.5 L721.1 618.6 M713.8 613.4 L721.2 616.5 M714.1 611.4 L721.4 614.5 M714.5 609.4 L721.9 612.5 M715.2 607.6 L722.5 610.7 M716.0 606.0 L723.4 609.1 M717.0 604.5 L724.3 607.6 M718.1 603.3 L725.5 606.4 M719.4 602.3 L726.7 605.4 M720.7 601.6 L728.1 604.7 M722.2 601.1 L729.5 604.3 M723.7 601.0 L731.1 604.1 M725.2 601.1 L732.6 604.2" fill="none" stroke="#111" stroke-width="0.90"/>
<ellipse cx="733.0" cy="620.5" rx="10.8" ry="15.8" transform="rotate(-12 733.0 620.5)" fill="#fff" stroke="#111" stroke-width="2.6" stroke-dasharray="1.800 1.800"/>
<ellipse cx="733.0" cy="620.5" rx="10.0" ry="15.0" transform="rotate(-12 733.0 620.5)" fill="#fff" stroke="#111" stroke-width="1.00"/>
<path d="M732.7 611.9 L746.7 616.9 L747.3 615.1 L733.3 610.1z" fill="#fff" stroke="#111" stroke-width="1.1"/>
<path d="M733.0 611.0 L747.0 616.0" fill="none" stroke="#111" stroke-width=".8"/>
<ellipse cx="748.2" cy="624.5" rx="15.3" ry="20.8" transform="rotate(-12 748.2 624.5)" fill="#fff" stroke="#111" stroke-width="2.6" stroke-dasharray="1.800 1.800"/>
<path d="M757.4 643.5 L765.6 647.1 M755.9 644.5 L764.2 648.0 M754.3 645.2 L762.6 648.7 M752.7 645.6 L761.0 649.1 M751.0 645.9 L759.3 649.4 M749.3 645.9 L757.6 649.4 M747.6 645.6 L755.9 649.1 M745.9 645.2 L754.2 648.7 M744.2 644.5 L752.5 648.0 M742.6 643.6 L750.9 647.1 M741.0 642.4 L749.3 645.9 M739.5 641.1 L747.8 644.6 M738.1 639.6 L746.4 643.1 M736.8 638.0 L745.1 641.5 M735.7 636.1 L743.9 639.7 M734.6 634.2 L742.9 637.7 M733.7 632.2 L742.0 635.7 M733.0 630.0 L741.3 633.5 M732.5 627.8 L740.8 631.3 M732.1 625.6 L740.4 629.1 M731.9 623.4 L740.2 626.9 M731.9 621.1 L740.1 624.7 M732.0 619.0 L740.3 622.5 M732.3 616.8 L740.6 620.3 M732.8 614.8 L741.1 618.3 M733.5 612.8 L741.8 616.4 M734.3 611.0 L742.6 614.5 M735.3 609.4 L743.6 612.9 M736.5 607.9 L744.7 611.4 M737.7 606.6 L746.0 610.1 M739.1 605.4 L747.4 608.9 M740.6 604.5 L748.8 608.0 M742.1 603.8 L750.4 607.3 M743.7 603.4 L752.0 606.9 M745.4 603.1 L753.7 606.6 M747.1 603.1 L755.4 606.6 M748.8 603.4 L757.1 606.9" fill="none" stroke="#111" stroke-width="0.90"/>
<ellipse cx="756.5" cy="628.0" rx="15.3" ry="20.8" transform="rotate(-12 756.5 628.0)" fill="#fff" stroke="#111" stroke-width="2.6" stroke-dasharray="1.800 1.800"/>
<ellipse cx="756.5" cy="628.0" rx="14.5" ry="20.0" transform="rotate(-12 756.5 628.0)" fill="#fff" stroke="#111" stroke-width="1.00"/>
<ellipse cx="757.5" cy="628.5" rx="10.1" ry="14.0" transform="rotate(-12 757.5 628.5)" fill="none" stroke="#111" stroke-width="1.00"/>
<ellipse cx="758.0" cy="628.8" rx="2.0" ry="2.8" transform="rotate(-12 758.0 628.8)" fill="none" stroke="#111" stroke-width="1.00"/>
<circle cx="758.5" cy="620" r="1.300" fill="#111"/>
<circle cx="764.5" cy="624" r="1.300" fill="#111"/>
<circle cx="766.0" cy="632" r="1.300" fill="#111"/>
<circle cx="761.0" cy="637" r="1.300" fill="#111"/>
<circle cx="755.0" cy="634" r="1.300" fill="#111"/>
<circle cx="754.0" cy="626" r="1.300" fill="#111"/>
</g>
<g>
<path d="M992.4 580.4 L989.2 581.1 L985.9 581.6 L982.6 581.7 L979.3 581.4 L976.1 580.9 L972.9 579.9 L969.8 578.7 L966.9 577.1 L964.0 575.2 L961.4 573.0 L958.9 570.6 L956.7 567.9 L954.7 564.9 L952.9 561.8 L951.4 558.5 L950.2 555.1 L949.3 551.5 L948.7 547.9 L948.3 544.2 L948.3 540.5 L948.6 536.8 L949.2 533.1 L950.1 529.6 L951.3 526.1 L952.8 522.8 L954.5 519.7 L956.5 516.7 L958.8 514.0 L961.2 511.6 L963.9 509.4 L966.7 507.4 L969.6 505.8 L972.7 504.6 L975.9 503.6 L979.1 503.0 L982.4 502.7 L985.7 502.8 L988.9 503.2 L992.1 504.0 L995.3 505.1" fill="none" stroke="#111" stroke-width="4" stroke-dasharray="2.600 2.400"/><path d="M995.3 505.1 L997.3 506.0 L999.3 507.1 L1001.3 508.3 L1003.1 509.6 L1004.9 511.1 L1006.6 512.7 L1008.2 514.5 L1009.7 516.3 L1011.1 518.2 L1012.4 520.3 L1013.6 522.4 L1014.6 524.6 L1015.5 526.8 L1016.3 529.2 L1017.0 531.6 L1017.5 534.0 L1017.9 536.4 L1018.2 538.9 L1018.3 541.4 L1018.3 543.9 L1018.1 546.4 L1017.8 548.9 L1017.4 551.3 L1016.8 553.7 L1016.1 556.1 L1015.2 558.4 L1014.2 560.7 L1013.1 562.8 L1011.9 564.9 L1010.6 566.9 L1009.2 568.8 L1007.6 570.6 L1006.0 572.3 L1004.2 573.8 L1002.4 575.3 L1000.5 576.6 L998.6 577.7 L996.6 578.8 L994.5 579.6 L992.4 580.4" fill="none" stroke="#111" stroke-width="2.200" stroke-dasharray="1.600 3.400"/>
<ellipse class="pw" cx="984.8" cy="542.2" rx="33.500" ry="38"/>
<ellipse class="pt" cx="986.3" cy="542.2" rx="31" ry="36" style="stroke-width:1.600px"/>
<path class="pt" style="stroke-width:1.700px" d="M1013.2 549.0 L1011.6 555.1 L1005.7 552.2 L1003.2 557.6 L1008.4 561.9 L1004.9 566.8 L1000.4 561.4 L996.3 565.0 L999.5 571.5 L994.6 574.2 L992.4 567.2 L987.4 568.5 L988.1 576.0 L982.6 576.1 L983.1 568.6 L978.0 567.5 L976.1 574.6 L971.1 572.1 L974.1 565.6 L969.8 562.1 L965.6 567.7 L961.9 563.0 L966.9 558.4 L964.2 553.2 L958.4 556.3 L956.6 550.3 L962.8 548.5 L962.2 542.5 L955.8 542.5 L956.3 536.1 L962.5 537.5 L964.0 531.6 L958.2 528.7 L960.8 523.1 L966.1 527.3 L969.5 522.7 L965.2 517.1 L969.5 513.3 L972.9 519.6 L977.6 517.1 L975.6 510.0 L980.9 508.5 L981.8 515.9 L987.0 515.8 L987.6 508.4 L992.9 509.6 L991.1 516.7 L995.9 519.1 L999.1 512.6 L1003.5 516.3 L999.4 522.0 L1003.0 526.4 L1008.1 522.0 L1010.9 527.4 L1005.2 530.7 L1006.9 536.4 L1013.1 534.8 L1013.8 541.2 L1007.4 541.4 L1007.0 547.5z"/>
<ellipse class="pt" cx="983.8" cy="543.2" rx="17" ry="21"/>
<ellipse class="pt" cx="982.8" cy="543.2" rx="10" ry="12.500"/>
<ellipse class="pt" cx="981.8" cy="543.7" rx="5.500" ry="7" style="stroke-width:1.500px"/>
<circle cx="982.8" cy="524.2" r="1.600" fill="#111"/>
<circle cx="997.8" cy="542.2" r="1.600" fill="#111"/>
<circle cx="973.8" cy="560.2" r="1.600" fill="#111"/>
<path class="pk" d="M982.8 575.2 l8 -1.500 l-.5 4 l-7 1.500z"/>
</g>
<g class="z4" transform="translate(800,535) scale(.25)">
<text x="178" y="243">5616</text><text x="330" y="243">5359</text><text x="343" y="335">49261</text><text x="555" y="338">4001</text><text x="640" y="410">49074</text><text x="805" y="472">4017</text><text x="950" y="532">49192</text><text x="1192" y="592">3540</text><text x="1368" y="665">3551</text><text x="1512" y="728">3511</text><text x="258" y="668">49151</text><text x="130" y="902">5553</text><text x="1575" y="795">49042</text>
<path class="ln" d="M300 95 L240 205 M445 110 L400 205 M495 140 L430 300 M360 95 L105 710 L160 735 M665 195 L620 300 M830 120 L730 370 M930 290 L870 435 M1135 235 L1030 495 M1300 0 L1215 200 M1320 445 L1260 555 M1490 510 L1430 630 M1600 660 L1585 690 M318 690 L190 735 M318 690 L420 780 L405 805 M235 790 L195 865 M330 870 L315 900 M40 500 L10 570"/>
<path class="ln" opacity=".5" d="M40 250 L15 300 L15 420 M120 430 v30"/>
<!-- bolt 5359 -->
<path class="pt" d="M442 100 q6 -10 18 -6 q8 10 4 24 l40 10 q14 -6 24 4 q4 14 -6 22 q-14 4 -22 -6 l-40 -10 q-12 2 -18 -6 q-6 -16 0 -32z M504 118 q-6 12 0 24"/>
<ellipse class="pw" cx="852" cy="76" rx="28" ry="32"/><path class="pt" d="M840 66 l24 20 M864 66 l-24 20 M852 60 v32"/>
<!-- clutch hub 4017 -->
<ellipse class="pw" cx="980" cy="140" rx="92" ry="134" transform="rotate(10 980 140)"/>
<path class="th" d="M975 8 q-90 20 -85 140 q10 110 85 126"/>
<ellipse cx="1045" cy="160" rx="70" ry="100" transform="rotate(10 1045 160)" fill="none" stroke="#111" stroke-width="14" stroke-dasharray="8 8"/>
<ellipse class="pw" cx="1040" cy="158" rx="66" ry="96" transform="rotate(10 1040 158)"/>
<ellipse class="pt" cx="1030" cy="150" rx="40" ry="60" transform="rotate(10 1030 150)"/><ellipse class="pt" cx="1032" cy="152" rx="12" ry="16"/>
<path d="M918 80 v120 M932 56 v170 M947 44 v196 M962 38 v60 M962 190 v56 M977 36 v40 M977 214 v36" fill="none" stroke="#111" stroke-width="8" stroke-dasharray="16 7"/>
<path class="pt" d="M990 20 q60 -10 100 40 M980 270 q60 0 100 -40"/>
<g fill="#fff" stroke="#111" stroke-width="4"><circle cx="1048" cy="96" r="9"/><circle cx="1090" cy="122" r="9"/><circle cx="1070" cy="212" r="9"/><circle cx="1004" cy="188" r="9"/></g>
<!-- nuts -->
<ellipse class="th" cx="1154" cy="200" rx="20" ry="24"/><ellipse class="pt" cx="1158" cy="202" rx="9" ry="11"/>
<path class="th" d="M1186 212 q10 -14 28 -8 q14 10 8 28 q-12 12 -28 4 q-12 -8 -8 -24z"/>
<!-- 5101 bearing left -->
<path class="pt" d="M0 425 q16 4 18 20 q-4 18 -18 18"/>
<ellipse class="pt" cx="52" cy="466" rx="34" ry="30"/><ellipse class="pt" cx="60" cy="470" rx="16" ry="16"/><path class="pt" d="M30 445 q-14 20 0 44"/>
<!-- lever 5553 -->
<ellipse class="th" cx="182" cy="746" rx="17" ry="18"/>
<path class="pt" d="M196 738 l100 44 M190 762 l98 44 M290 784 q10 4 8 18 q-4 10 -12 6"/>
<ellipse class="pt" cx="318" cy="800" rx="16" ry="20"/>
<ellipse cx="360" cy="822" rx="30" ry="36" fill="none" stroke="#111" stroke-width="12" stroke-dasharray="9 9"/><ellipse class="pw" cx="360" cy="822" rx="26" ry="32"/><ellipse class="pt" cx="366" cy="826" rx="10" ry="13"/>
<ellipse class="th" cx="402" cy="838" rx="14" ry="16"/>
</g>
<g class="z5" transform="translate(1000,520) scale(.2)">
<ellipse cx="640" cy="440" rx="96" ry="190" transform="rotate(-14 640 440)" fill="none" stroke="#111" stroke-width="14" stroke-dasharray="22 26"/>
<ellipse class="pw" cx="640" cy="440" rx="90" ry="182" transform="rotate(-14 640 440)"/>
<ellipse class="pt" cx="646" cy="442" rx="70" ry="150" transform="rotate(-14 646 442)"/>
<ellipse class="pw" cx="702" cy="462" rx="90" ry="182" transform="rotate(-14 702 462)"/>
<ellipse cx="708" cy="464" rx="62" ry="140" transform="rotate(-14 708 464)" fill="none" stroke="#111" stroke-width="14" stroke-dasharray="12 14"/>
<ellipse class="pt" cx="706" cy="464" rx="76" ry="160" transform="rotate(-14 706 464)"/>
<ellipse cx="764" cy="484" rx="96" ry="190" transform="rotate(-14 764 484)" fill="none" stroke="#111" stroke-width="14" stroke-dasharray="22 26"/>
<ellipse class="pw" cx="764" cy="484" rx="90" ry="182" transform="rotate(-14 764 484)"/>
<ellipse class="pt" cx="770" cy="486" rx="70" ry="150" transform="rotate(-14 770 486)"/>
<ellipse class="pw" cx="826" cy="506" rx="90" ry="182" transform="rotate(-14 826 506)"/>
<ellipse cx="832" cy="508" rx="62" ry="140" transform="rotate(-14 832 508)" fill="none" stroke="#111" stroke-width="14" stroke-dasharray="12 14"/>
<ellipse class="pt" cx="830" cy="508" rx="76" ry="160" transform="rotate(-14 830 508)"/>
<ellipse cx="888" cy="528" rx="96" ry="190" transform="rotate(-14 888 528)" fill="none" stroke="#111" stroke-width="14" stroke-dasharray="22 26"/>
<ellipse class="pw" cx="888" cy="528" rx="90" ry="182" transform="rotate(-14 888 528)"/>
<ellipse class="pt" cx="894" cy="530" rx="70" ry="150" transform="rotate(-14 894 530)"/>
<ellipse class="pw" cx="950" cy="550" rx="90" ry="182" transform="rotate(-14 950 550)"/>
<ellipse cx="956" cy="552" rx="62" ry="140" transform="rotate(-14 956 552)" fill="none" stroke="#111" stroke-width="14" stroke-dasharray="12 14"/>
<ellipse class="pt" cx="954" cy="552" rx="76" ry="160" transform="rotate(-14 954 552)"/>
<ellipse cx="1012" cy="572" rx="96" ry="190" transform="rotate(-14 1012 572)" fill="none" stroke="#111" stroke-width="14" stroke-dasharray="22 26"/>
<ellipse class="pw" cx="1012" cy="572" rx="90" ry="182" transform="rotate(-14 1012 572)"/>
<ellipse class="pt" cx="1018" cy="574" rx="70" ry="150" transform="rotate(-14 1018 574)"/>
<ellipse class="pw" cx="1074" cy="594" rx="90" ry="182" transform="rotate(-14 1074 594)"/>
<ellipse cx="1080" cy="596" rx="62" ry="140" transform="rotate(-14 1080 596)" fill="none" stroke="#111" stroke-width="14" stroke-dasharray="12 14"/>
<ellipse class="pt" cx="1078" cy="596" rx="76" ry="160" transform="rotate(-14 1078 596)"/>
<ellipse class="pw" cx="1140" cy="612" rx="132" ry="172" transform="rotate(-12 1140 612)"/>
<ellipse class="th" cx="1140" cy="612" rx="132" ry="172" transform="rotate(-12 1140 612)"/>
<ellipse class="pt" cx="1146" cy="614" rx="104" ry="140" transform="rotate(-12 1146 614)"/>
<path class="pt" d="M1170 490 l-14 110 M1186 494 l-12 110 M1150 606 l-90 -34 M1148 622 l-88 -30 M1150 620 l-52 100 M1166 626 l-52 100 M1160 610 l84 30 M1160 626 l80 26"/>
<ellipse class="pw" cx="1156" cy="614" rx="15" ry="20"/>
<g fill="none" stroke="#111" stroke-width="6"><path d="M1140 530 q-16 4 -14 22 q6 14 18 12 M1212 548 q-14 6 -10 22 q8 12 18 8 M1086 636 q-16 4 -14 22 q6 14 18 12 M1148 676 q-14 6 -10 22 q8 12 18 8"/></g>
</g>
<g class="z5" transform="translate(1290,620) scale(.19436)">
<!-- gasket -->
<path class="th" d="M400 80 L280 110 L90 320 L100 440 L130 560 L210 660 L250 650"/>
<path class="pt" d="M390 100 L290 128 L112 325 L120 440 L150 550 L220 640 M90 320 q-14 10 -4 24 M130 560 q-14 6 -8 20 M280 110 q-4 -14 10 -16 M200 250 l14 12 M120 420 l40 10 l30 100"/>
<!-- cover body -->
<path class="pw" d="M400 80 L520 65 L620 80 L700 90 L790 130 L810 200 L845 250 L850 330 L820 420 L790 460 L740 450 L720 500 L700 590 L640 680 L560 710 L470 690 L420 720 L340 700 L240 640 L200 520 L185 400 L200 330 L280 250 L400 150z"/>
<path class="th" d="M400 80 L520 65 L620 80 L700 90 L790 130 L810 200 L845 250 L850 330 L820 420 L790 460 M470 690 L420 720 L340 700 L240 640 L200 520 L185 400 L200 330 L280 250 L400 150"/>
<path class="th" d="M450 380 Q480 310 560 290 Q660 290 705 390 Q730 500 700 590 Q660 680 560 710 Q470 700 435 600 Q415 480 450 380z"/>
<path class="pt" d="M515 540 L640 440 L672 472 L550 580z M530 545 L640 458 M420 420 q-20 40 -10 100 l30 40 M420 430 q20 -10 30 10 M400 150 L520 120 L540 70 M520 120 L600 150 L620 80 M420 170 L300 270 L220 350 L210 420 M300 270 L330 300 M230 500 L320 520 L360 620 L340 700 M320 520 L380 480 M250 640 L330 620 M400 200 L440 240 M470 190 l-20 60 M520 150 l-40 100"/>
<ellipse class="th" cx="325" cy="430" rx="40" ry="44"/><ellipse class="pt" cx="330" cy="432" rx="22" ry="26"/><ellipse class="pt" cx="332" cy="434" rx="10" ry="12"/>
<path class="pt" d="M290 400 q-30 30 -10 70 M365 410 l40 -10 M362 455 l40 10"/>
<ellipse class="th" cx="456" cy="272" rx="22" ry="24"/><ellipse class="pt" cx="458" cy="274" rx="10" ry="11"/>
<path class="th" d="M620 160 L700 150 L770 170 L780 220 L740 270 L660 280 L620 240z"/><ellipse class="pt" cx="700" cy="215" rx="28" ry="36" transform="rotate(15 700 215)"/>
<path class="pt" d="M530 220 q30 -14 60 0 q6 20 -4 36 q-30 10 -56 -4z M540 150 l70 30 M560 130 l60 24 M640 100 l80 30 l60 40 M790 250 q20 60 0 120 M810 260 q16 50 0 110"/>
<ellipse class="th" cx="770" cy="378" rx="34" ry="38"/><ellipse class="pt" cx="772" cy="380" rx="18" ry="22"/>
<path class="pt" d="M730 330 q-10 50 10 100 M300 290 l30 10 M290 310 l30 10 M420 580 l20 -60 l-20 -30 M345 640 q10 -14 20 0 q0 16 -10 20 M400 690 l14 -10"/>
<path class="dd" d="M480 200 q-10 60 -60 100 M560 330 q60 -10 110 40 M600 640 q60 -30 80 -100 M250 450 q0 80 40 140 M380 340 q30 -30 60 -20"/>
<!-- bolts below -->
<path class="pt" d="M488 735 q6 -10 16 -6 l60 28 q16 -6 30 4 q10 14 0 30 q-14 10 -28 0 l-6 -12 l-64 -28 q-10 -6 -8 -16z M566 758 q-10 16 -2 36"/>
<ellipse class="th" cx="345" cy="778" rx="22" ry="24"/><ellipse class="pt" cx="347" cy="780" rx="9" ry="10"/>
<path class="pt" d="M372 790 l40 18 q14 -8 28 2 q10 14 0 30 q-14 8 -26 0 l-6 -14 l-40 -18z M380 794 l-6 16 M392 800 l-6 16"/>
<!-- washer 5395 / pin / threaded -->
<ellipse class="th" cx="886" cy="420" rx="30" ry="32"/><path class="pt" d="M870 396 q-14 24 0 50"/>
<path class="pt" d="M986 335 q8 -8 16 0 l6 70 q-8 8 -16 0z"/>
<path class="th" d="M968 450 l60 24 M964 470 l62 24"/>
<path class="pt" d="M968 450 q-8 10 -4 20 M980 455 l-4 20 M992 460 l-4 20 M1004 464 l-4 20"/>
<!-- gear 4048 (top-left) -->
<path class="pt" d="M520 65 L530 120 M620 80 L610 150 M700 90 L690 150 M790 130 L770 170 M810 200 L780 220 M845 250 L810 260 M850 330 L805 350 M820 420 L790 400 M740 450 L730 420 M200 330 L240 350 M185 400 L230 410 M200 520 L240 500 M240 640 L270 600 M340 700 L350 660 M420 720 L415 680 M470 690 L470 660 M280 250 L300 270 M560 200 L600 230 M640 290 L660 260 M705 390 L740 380 M450 380 L410 370 M435 600 L400 610 M500 300 L520 330 M600 300 L600 330 M680 360 L700 340"/>
<path class="pk" d="M560 150 l20 4 l-4 18 l-18 -4z M640 170 l10 2 l-2 14 l-10 -2z M760 290 l14 4 l-4 16 l-12 -4z M286 480 l10 0 l0 14 l-10 0z M590 186 l8 0 l0 10 l-8 0z"/>
</g>
<g class="z4" transform="translate(1200,535) scale(.25)">
<text x="448" y="45">49155</text><text x="890" y="40">2492</text><text x="1070" y="108">5359</text><text x="478" y="157">4048</text><text x="305" y="217">9351</text><text x="638" y="235">5315</text><text x="1268" y="602">5318</text><text x="930" y="818">5395</text><text x="35" y="870">4820</text><text x="188" y="840">49228</text><text x="955" y="925">5661</text><text x="1150" y="925">5663</text>
<path class="ln" d="M585 45 L635 55 L640 80 M500 60 L360 355 M640 80 L490 420 M525 175 L455 345 M355 235 L305 335 M745 235 L835 262 M945 55 L885 200 M850 290 L810 350 M710 0 L625 195 M600 270 L565 340 L630 372 M1085 0 L995 240 M1120 120 L1025 365 M1235 40 L1095 385 M1040 305 L1105 335 L1095 385 M1370 595 L1395 605 L1415 640 L1475 675 M1040 670 L1010 790 M1175 740 L1110 900 M1150 620 L1050 900 M1325 870 L1300 900 M195 495 L20 900 M230 560 L120 830 M285 590 L180 830 M345 610 L250 805 M40 570 L0 650 M470 840 L430 900 M590 880 L575 900"/>
<path class="sl" d="M265 0 L265 465" opacity=".45"/>
<path class="th" d="M186 452 q10 -14 28 -8 q12 10 6 28 q-12 12 -28 4 q-10 -8 -6 -24z"/>
<path class="th" d="M242 478 l40 12 q8 8 2 20 l-40 -12 q-8 -8 -2 -20z M204 512 q6 -8 16 -4 l26 14 q6 10 0 22 q-8 6 -16 2 l-26 -14 q-6 -10 0 -20z"/><path class="pt" d="M254 482 l-4 20 M266 486 l-4 20 M218 514 l-6 22 M232 520 l-6 22"/>
<ellipse class="th" cx="290" cy="556" rx="20" ry="22"/><ellipse class="pt" cx="292" cy="558" rx="8" ry="9"/>
<path class="pt" d="M326 566 q4 -8 12 -4 l26 10 q14 -6 24 4 q6 14 -4 24 q-12 6 -22 -2 l-4 -10 l-28 -10 q-6 -6 -4 -12z"/>
<!-- nut washer gear -->
<ellipse class="th" cx="300" cy="355" rx="19" ry="22"/><ellipse class="pt" cx="303" cy="357" rx="8" ry="10"/>
<ellipse class="th" cx="350" cy="376" rx="16" ry="17"/><ellipse class="pt" cx="352" cy="378" rx="6" ry="7"/>
<ellipse cx="424" cy="410" rx="42" ry="60" transform="rotate(10 424 410)" fill="none" stroke="#111" stroke-width="14" stroke-dasharray="8 8"/>
<ellipse class="pw" cx="426" cy="410" rx="38" ry="56" transform="rotate(10 426 410)"/><path class="pt" d="M425 385 q10 4 8 14 l6 10 l-6 10 q0 10 -8 14 q-8 -4 -8 -14 l-6 -10 l6 -10 q0 -10 8 -14z M396 380 q-10 30 0 64"/>
<ellipse class="th" cx="486" cy="434" rx="13" ry="15"/>
<!-- 5315 / 2492 -->
<path class="th" d="M852 215 q10 -16 26 -12 q10 8 6 22 l-10 14 l-14 2 q-10 -8 -8 -26z"/><ellipse class="pt" cx="852" cy="268" rx="22" ry="14"/><path class="pt" d="M858 240 v14"/>
<path class="th" d="M955 222 q10 -6 14 4 l8 30 q10 20 44 42"/><path class="pt" d="M950 228 q4 40 30 56 l36 22"/>
<ellipse class="th" cx="1010" cy="380" rx="18" ry="20"/><ellipse class="pt" cx="1012" cy="382" rx="7" ry="8"/>
<path class="th" d="M1050 392 q6 -8 16 -4 l30 8 q10 8 4 20 q-8 8 -18 2 l-28 -10 q-8 -6 -4 -16z"/>
<!-- kick/starter shaft 5395 area -->
<path class="pt" d="M1125 600 q8 -6 14 2 l10 56 q-8 8 -16 0z"/>
<!-- pump 5603 -->
<path class="th" d="M1112 690 l50 20 M1108 706 l50 20"/><path class="pt" d="M1112 690 q-8 8 -4 16 M1124 694 l-4 18 M1136 699 l-4 18 M1148 704 l-4 18"/>
<path class="th" d="M1165 700 q20 -20 50 -10 l30 10 q20 20 10 40 l-30 30 q-30 10 -50 -10 q-16 -30 -10 -60z"/><path class="pk" d="M1200 700 l30 10 l-10 40 l-30 -10z"/><path d="M1204 712 l14 4 l-4 16 l-12 -4z" fill="#fff"/>
<ellipse class="pt" cx="1300" cy="702" rx="8" ry="6"/><ellipse class="pt" cx="1245" cy="820" rx="10" ry="6"/>
<!-- water pump housing 6013 -->
<path class="pw" d="M1355 690 q10 -14 28 -10 l10 14 q10 -16 30 -12 q20 6 24 30 l-4 40 l16 30 l-10 60 l-50 50 l-40 6 l-30 -20 l-26 -10 l-8 -50 l10 -50 l30 -30z"/>
<path class="th" d="M1355 690 q10 -14 28 -10 l10 14 q10 -16 30 -12 q20 6 24 30 l-4 40 l16 30 l-10 60 l-50 50 l-40 6 l-30 -20 l-26 -10 l-8 -50 l10 -50 l30 -30z"/>
<path class="pt" d="M1365 700 l-6 60 M1385 696 l-4 66 M1405 694 l-2 66 M1430 700 l-6 60 M1340 770 q40 -30 90 -10 M1330 800 q20 40 60 50"/>
<ellipse class="pt" cx="1385" cy="815" rx="40" ry="50" transform="rotate(-20 1385 815)"/><ellipse class="pt" cx="1392" cy="820" rx="24" ry="32" transform="rotate(-20 1392 820)"/>
<path class="th" d="M1500 610 q10 -16 28 -10 l10 30 l-10 30 q-20 6 -30 -10z"/><ellipse class="pt" cx="1486" cy="684" rx="12" ry="7" transform="rotate(30 1486 684)"/>
<path class="pt" d="M1520 710 q8 -4 10 6 M1520 720 l10 14 M1516 770 q10 0 12 10 M1516 800 q10 4 10 14"/>
<ellipse class="pt" cx="1476" cy="890" rx="12" ry="10"/>
</g>
<g class="z4" transform="translate(300,740) scale(.25)">
<text x="150" y="168">5653</text><text x="278" y="222">5106</text><text x="315" y="318">49120</text><text x="1195" y="145">5636</text><text x="1310" y="198">49035</text><text x="1168" y="312">4635</text>
<path class="ln" d="M345 185 L430 0 M395 278 L500 20 M1150 70 L1180 0 M1250 105 L1300 0 M1385 160 L1435 40 M1210 335 L1180 410 M880 360 L860 410 M230 110 L250 60"/>
<path class="pt" d="M282 12 l30 12 q8 8 2 18 l-34 -12"/>
<ellipse class="pt" cx="508" cy="2" rx="12" ry="14"/>
<ellipse class="th" cx="893" cy="328" rx="19" ry="22"/><ellipse class="pt" cx="896" cy="330" rx="8" ry="10"/>
<path class="pw" d="M960 330 q14 -20 40 -20 l80 30 q26 16 24 50 l-4 30 h-120 q-30 -20 -20 -90z"/>
<path class="th" d="M960 330 q14 -20 40 -20 l80 30 q26 16 24 50 l-4 30"/>
<path class="pt" d="M1000 312 q-30 40 -10 100 M1060 350 q-20 30 -10 70 M935 318 q10 -6 14 4 l4 30 l10 6 M975 350 l20 10 M985 380 l10 -6"/><circle cx="1078" cy="392" r="6" fill="#111"/><circle cx="1030" cy="400" r="5" fill="#111"/>
<ellipse class="pt" cx="1080" cy="392" rx="18" ry="20"/>
</g>
<g class="z1">
<text x="863" y="773.800">4046</text><text class="sm" x="1037.500" y="816.500">4045</text><text class="sm" x="1095" y="834">4625</text>
<text x="1216" y="773.800">49191</text><text x="1280" y="797">5327</text><text x="1314.500" y="810.500">212</text><text x="1319.500" y="833">5358</text><text x="1355" y="830.500">49246</text>
<text x="1455.300" y="788.500">5603</text><text x="1499.300" y="788.200">5341</text><text x="1508" y="810.800">6013</text><text x="1525.300" y="834">5358</text>
<path class="ln" d="M877.500 765 L885 750 M1046 820 L1037.500 842.500 M1103.700 838.700 L1102.500 842.500 M1232.500 763.700 L1245 740 M1297.500 787.500 L1320 740 M1327.500 801 L1347.500 753.700 M1336 823.700 L1355 780 M1375 821 L1395 775 M1367.500 783.700 L1343.700 842.500 M1455 757.500 L1462.500 740 M1472.500 778.700 L1490 740 M1506 756 L1514 740 M1516 778 L1530 752 M1523 800 L1540 760 M1543 822 L1566 770"/>
<!-- bolts -->
<g class="pt" style="stroke-width:1.100px">
<ellipse cx="1356.200" cy="772" rx="4.500" ry="5"/><path d="M1361 773 l10 4 q4 -1.500 6.500 1 q2 4 -1 7 q-3.500 1.500 -6 -.5 l-1 -3 l-10 -4z"/>
<path d="M1384 762 q1.500 -2 4 -1 l14 5.500 q4 -1.500 6.500 1 q2 4 -1 7 q-3.500 1.500 -6 -.5 l-1 -3 l-15 -5.500 q-2 -1.500 -1.500 -3.500z"/>
<ellipse cx="1568" cy="761" rx="4.500" ry="5.500"/><path d="M1572 758 l14 6 M1571 765 l14 6"/>
<ellipse cx="1403" cy="772" rx="5" ry="4.500"/>
</g>
</g>
<!-- watermark -->
<g>
<text class="wm" x="1143.500" y="774" font-size="20" textLength="183" lengthAdjust="spacingAndGlyphs">Активация Windows</text>
<text class="wm" x="1143.500" y="795.500" font-size="15" textLength="391" lengthAdjust="spacingAndGlyphs">Чтобы активировать Windows, перейдите к параметрам</text>
<text class="wm" x="1143.500" y="815.500" font-size="15" textLength="89" lengthAdjust="spacingAndGlyphs">компьютера.</text>
</g>
<!-- red arrow -->
<text class="lb" x="202" y="768.500" style="font-size:11.100px;stroke-width:.12px">49121</text>
<path d="M57 806.500 L330.500 730.500 L322 713 Q320 707.500 326 709 L372 729.500 Q377 732.500 373.500 736.500 L343.500 777 Q339.500 781.500 338.500 775.500 L337 761.500 L60.500 818 Q53.500 818.500 53 812.500 Q53 808 57 806.500z" fill="#e53935"/>
</g>
<g id="task">
<rect x="1583" y="85" width="17" height="758" fill="#f1f1f1"/>
<rect x="1585" y="217" width="13" height="508" fill="#c1c1c1"/>
<path d="M1587 100 l4.500 -5 4.500 5z" fill="#505050"/><path d="M1587 829 l4.500 5 4.500 -5z" fill="#505050"/>
<rect x="0" y="843" width="1600" height="17" fill="#f1f1f1"/>
<rect x="17.500" y="845" width="1361" height="13" fill="#c1c1c1"/>
<path d="M10 847 l-4.500 4.500 4.500 4.500z" fill="#a3a3a3"/><path d="M1572 847 l4.500 4.500 -4.500 4.500z" fill="#505050"/>
<rect x="1583" y="843" width="17" height="17" fill="#e4e4e4"/>
<rect x="0" y="860" width="1600" height="40" fill="#657c80"/>
<rect x="0" y="859" width="1600" height="1" fill="#dfe4e5"/>
<rect x="52.5" y="861.500" width="57" height="38" fill="#84999a" stroke="#9fb0b0" stroke-width="1"/>
<rect x="114.5" y="861.500" width="57" height="38" fill="#a3b1b1" stroke="#d5dcdc" stroke-width="1"/>
<rect x="176.5" y="861.500" width="57" height="38" fill="#84999a" stroke="#9fb0b0" stroke-width="1"/>
<rect x="300.5" y="861.500" width="57" height="38" fill="#84999a" stroke="#9fb0b0" stroke-width="1"/>
<rect x="362.5" y="861.500" width="57" height="38" fill="#84999a" stroke="#9fb0b0" stroke-width="1"/>
<rect x="486.5" y="861.500" width="57" height="38" fill="#84999a" stroke="#9fb0b0" stroke-width="1"/>
<rect x="734.5" y="861.500" width="57" height="38" fill="#84999a" stroke="#9fb0b0" stroke-width="1"/>
<rect x="796.5" y="861.500" width="57" height="38" fill="#84999a" stroke="#9fb0b0" stroke-width="1"/>
<path d="M12 867.500 l11 -1.600 v12.300 h-11z M24.500 865.700 l13.500 -2 v14.500 h-13.500z M12 879.700 h11 v12.300 l-11 -1.600z M24.500 879.700 h13.500 v14.500 l-13.500 -2z" fill="#fff"/>
<g transform="translate(65,866)"><path d="M1 4 q0 -2 2 -2 h10 l2 3 h14 q2 0 2 2 v18 q0 2 -2 2 h-26 q-2 0 -2 -2z" fill="#f3d68a" stroke="#d9b55a"/><rect x="4" y="2" width="3" height="2" fill="#2a9a3a"/><rect x="12" y="4" width="3" height="2" fill="#d33"/><rect x="20" y="6" width="3" height="2" fill="#28f"/><path d="M5 29 v-9 q0 -3 3 -3 h15 q3 0 3 3 v9 h-5 v-6 h-11 v6z" fill="#6ec3ee" stroke="#2f8fcb"/></g>
<g transform="translate(143,880)"><circle r="14" fill="#e33b2e"/><path d="M0 0 L-12.100 -7 A14 14 0 0 0 7 12.100z" fill="#3aa757"/><path d="M0 0 L7 12.100 A14 14 0 0 0 12.100 -7 L0 -7z" fill="#fcc934"/><path d="M-12.100 -7 A14 14 0 0 1 12.100 -7 L0 -7z" fill="#e33b2e"/><circle r="6.500" fill="#fff"/><circle r="5.200" fill="#4a8af4"/></g>
<g transform="translate(205,880)"><circle r="14.500" fill="#2c6fc0"/><path d="M-13 -3 q4 -14 18 -11 q10 4 9 15 q-3 -7 -10 -8 q-8 -2 -17 4z" fill="#1b4f96"/><path d="M-11 0 l11 -7 11 7 v9 q-11 6 -22 0z" fill="#eceae2" stroke="#b9b5a8" stroke-width=".8"/><path d="M-11 0 l11 7 11 -7" fill="none" stroke="#b9b5a8" stroke-width=".8"/><path d="M-8 10 q8 6 18 1 q-3 6 -10 6 q-6 0 -8 -7z" fill="#1b4f96"/></g>
<g transform="translate(267,880)"><circle r="15" fill="#1c1c1e"/><circle r="11.500" fill="#2d2d30" stroke="#555" stroke-width="1"/><circle r="8.500" fill="#2a7ea0"/><circle r="8.500" fill="none" stroke="#0d3a4e" stroke-width="1.500"/><text x="0" y="5" text-anchor="middle" font-size="14" font-weight="bold" fill="#e8f4fa" style="font-family:&quot;Liberation Serif&quot;,serif">1</text></g>
<rect x="315.500" y="866.500" width="27" height="27" fill="#3a2412" stroke="#f7a22b" stroke-width="2"/><text x="329" y="886" text-anchor="middle" font-size="16" font-weight="bold" fill="#f7a22b" textLength="16" lengthAdjust="spacingAndGlyphs">Ai</text>
<rect x="377.500" y="866.500" width="27" height="27" fill="#1b1f63" stroke="#8ec5f7" stroke-width="2"/><text x="391" y="886" text-anchor="middle" font-size="16" font-weight="bold" fill="#8ec5f7" textLength="19" lengthAdjust="spacingAndGlyphs">Ps</text>
<g transform="translate(453,880)"><circle r="15.500" fill="#1a1a1a"/><circle r="13" fill="#2b2b2b" stroke="#4a4a4a"/><text x="0" y="3" text-anchor="middle" font-size="6.500" font-weight="bold" fill="#e8552a" textLength="20" lengthAdjust="spacingAndGlyphs">RESIZE</text></g>
<g transform="translate(500,864)"><path d="M3 4 q0 -3 3 -3 h16 l6 6 v20 q0 3 -3 3 h-19 q-3 0 -3 -3z" fill="#f4f8f1" stroke="#3f9a2f" stroke-width="1.200"/><path d="M6 10 l22 -2 2 22 -22 2z" fill="#e9f1e4" stroke="#c9d9c0"/><path d="M9 20 h6 v4 h-6z M17 19.500 h5 v4 h-5z M24 19 h4 v4 h-4z M9 26 h6 v4 h-6z M17 25.500 h5 v4 h-5z M24 25 h4 v4 h-4z M22 12 h6 v4 h-6z" fill="#58a14a"/><path d="M8 7 l4 0 3 4 3 -5 4 0 -5 7 5 7 h-4 l-3 -4.500 -3 4.500 h-4 l5 -7z" fill="#2e7d22"/></g>
<g transform="translate(577,880)"><circle r="14.500" fill="#fff" stroke="#1a1a9c" stroke-width="1.500"/><path d="M-11 -8 v16 M-8 -11 v22 M-5 -13 v26 M-1.500 -14 v28 M2 -14 v28 M5.500 -13 v26 M9 -11 v22 M12 -7 v14" stroke="#2a2ad0" stroke-width="2"/><path d="M-9 7 l16 -13 M-6 10 l14 -11" stroke="#e0399a" stroke-width="1.800"/></g>
<g transform="translate(624,865)"><rect width="29" height="29" fill="#008a00"/><rect x="7" y="4" width="15" height="21" rx="1" fill="none" stroke="#fff" stroke-width="1.500"/><rect x="9.500" y="6.500" width="10" height="3.500" fill="#fff"/><path d="M9.500 12 h2.500 v2.500 h-2.500z M13.300 12 h2.500 v2.500 h-2.500z M17 12 h2.500 v2.500 h-2.500z M9.500 16 h2.500 v2.500 h-2.500z M13.300 16 h2.500 v2.500 h-2.500z M17 16 h2.500 v2.500 h-2.500z M9.500 20 h2.500 v2.500 h-2.500z M13.300 20 h2.500 v2.500 h-2.500z M17 20 h2.500 v2.500 h-2.500z" fill="#fff"/></g>
<g transform="translate(685,866)"><path d="M0 0 h14 q14 2 14 16 q0 8 -8 12 h-20z" fill="#8cc63f"/><path d="M2 3 l8 -2 9 16 -2 8 -7 -4z" fill="#fff" opacity=".9"/><path d="M4 5 l7 12 M7 3 l8 13" stroke="#8cc63f" stroke-width="1.200"/><path d="M15 22 l2 3 1 -4z" fill="#222"/><path d="M16 2 q8 8 6 24 M22 6 q4 8 1 18" stroke="#c5e39a" stroke-width="1.500" fill="none"/></g>
<g transform="translate(763,880)"><circle r="15.500" fill="#6fb03c"/><path d="M-9 -5 h5 l2 10 q1 3 4 2 q3 -1 2 -5 l-1.500 -7 h5 l2 9 q1 4 3 3 l0 3 q-5 2 -7 -2 q-2 3 -6 3 q-4 0 -5 -5 l-1 5 h-5z" fill="#fff" transform="rotate(-8)"/></g>
<g transform="translate(825,880)"><circle cx="-4" cy="-4" r="10.500" fill="#12a5f4"/><circle cx="4" cy="4" r="10.500" fill="#12a5f4"/><circle r="12" fill="#12a5f4"/><text x="0" y="8" text-anchor="middle" font-size="23" font-weight="bold" fill="#fff">S</text></g>
<rect x="1297" y="872" width="29" height="17" rx="2" fill="none" stroke="#fff" stroke-width="1.500"/>
<path d="M1300 876 h24 M1300 879.500 h24 M1300 883 h24" stroke="#fff" stroke-width="2" stroke-dasharray="2.200 1"/><path d="M1304 886 h15" stroke="#fff" stroke-width="1.600"/>
<path d="M1340 883.500 l4.500 -5 4.500 5z" fill="#fff"/>
<rect x="1361" y="873" width="16" height="16" fill="#e41e26"/><path d="M1364.500 883.500 c0 -6 8 -7 9 -2.500 M1368 878 c2.500 2.500 3 6.500 6 5" fill="none" stroke="#fff" stroke-width="1.400" stroke-linecap="round"/>
<path d="M1389 875 l4 -2 4 2 -4 2z M1397 875 l4 2 -4 2 -4 -2z M1389 880 l4 2 4 -2 -4 -2 z M1389 884 l4 2 4 -2" fill="#fff" stroke="#fff" stroke-width=".8" opacity=".95"/><circle cx="1397" cy="885" r="3.800" fill="#3db13d"/><path d="M1395 885 l1.500 1.500 2.500 -3" stroke="#fff" stroke-width="1.200" fill="none"/>
<rect x="1414.500" y="875.500" width="10" height="8" fill="none" stroke="#fff" stroke-width="1.400"/><path d="M1416 887.500 h8 M1420 884 v3.500" stroke="#fff" stroke-width="1.400"/><rect x="1410.500" y="874" width="3.500" height="5" fill="#657c80" stroke="#fff" stroke-width="1.200"/><path d="M1412.200 879 v7" stroke="#fff" stroke-width="1.200"/>
<path d="M1434 878.500 h3 l4.500 -4 v13 l-4.500 -4 h-3z" fill="#fff"/><path d="M1443.500 878 q2 3 0 6 M1446 876 q3.500 5 0 10" fill="none" stroke="#fff" stroke-width="1.200"/>
<path d="M1459 884 q-2.500 -4 2 -5 q1 -5 6 -4 q4 1 4 5 q3 1 2 4z" fill="#fff"/><path d="M1459.500 880.500 q7 -2 12.500 1" stroke="#657c80" stroke-width="1" fill="none"/><circle cx="1469" cy="885" r="4" fill="#3db13d"/><path d="M1467 885 l1.500 1.500 2.500 -3" stroke="#fff" stroke-width="1.200" fill="none"/>
<text x="1488" y="885.500" font-size="12.500" fill="#fff" textLength="22" lengthAdjust="spacingAndGlyphs">РУС</text>
<text x="1541" y="876.500" font-size="12.500" fill="#fff" textLength="27" lengthAdjust="spacingAndGlyphs">20:14</text>
<text x="1527" y="893.500" font-size="12.500" fill="#fff" textLength="54" lengthAdjust="spacingAndGlyphs">06.07.2015</text>
</g>
</svg>
</body></html>
